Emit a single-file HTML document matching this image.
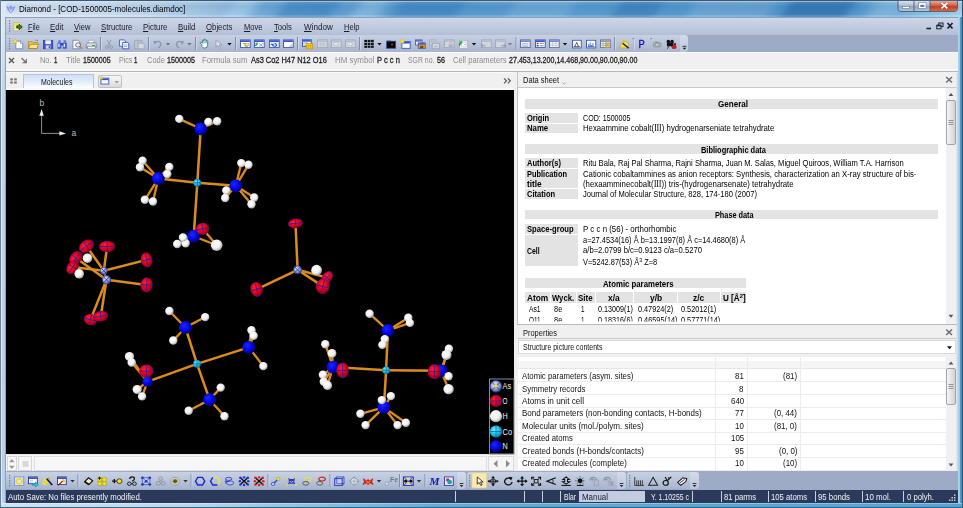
<!DOCTYPE html>
<html><head><meta charset="utf-8"><title>Diamond - [COD-1500005-molecules.diamdoc]</title>
<style>
html,body{margin:0;padding:0}
body{width:963px;height:508px;position:relative;overflow:hidden;font-family:"Liberation Sans", sans-serif;background:#7fb0d8}
.t{position:absolute;white-space:nowrap;line-height:12px;transform-origin:0 50%;display:inline-block}
.t u{text-decoration:underline;text-underline-offset:1px;text-decoration-thickness:1px}
svg{position:absolute;overflow:visible}
</style></head><body>
<div style="position:absolute;left:0;top:0;width:963px;height:508px;
background:
linear-gradient(90deg,#dde8f5 0px,#d6e4f3 70px,#c3d9ee 150px,#9cc4e4 215px,#6fa9d8 270px,#5a9bd0 420px,#5b9dd1 600px,#5596cc 760px,#5a9bd0 860px,#86bde2 915px,#a6d2ee 963px);"></div>
<svg style="left:0;top:0;overflow:hidden" width="963" height="18" viewBox="0 0 963 18">
<defs><linearGradient id="tbv" x1="0" y1="0" x2="0" y2="1"><stop offset="0" stop-color="#fff" stop-opacity="0.12"/><stop offset="0.35" stop-color="#003a70" stop-opacity="0.10"/><stop offset="0.8" stop-color="#003a70" stop-opacity="0.02"/><stop offset="0.86" stop-color="#fff" stop-opacity="0.14"/><stop offset="1" stop-color="#fff" stop-opacity="0.22"/></linearGradient>
<filter id="bl" x="-10%" y="-50%" width="120%" height="200%"><feGaussianBlur stdDeviation="5 1.5"/></filter></defs>
<g filter="url(#bl)">
<polygon points="238,-4 262,-4 244,22 220,22" fill="#b4d8f2" opacity="0.55"/>
<polygon points="290,-4 345,-4 327,22 272,22" fill="#2f78b6" opacity="0.45"/>
<polygon points="365,-4 392,-4 374,22 347,22" fill="#a8d3f0" opacity="0.45"/>
<polygon points="405,-4 470,-4 452,22 387,22" fill="#2f78b6" opacity="0.40"/>
<polygon points="520,-4 580,-4 562,22 502,22" fill="#9ccaec" opacity="0.30"/>
<polygon points="625,-4 668,-4 650,22 607,22" fill="#2a70ae" opacity="0.45"/>
<polygon points="700,-4 780,-4 762,22 682,22" fill="#9ccaec" opacity="0.30"/>
<polygon points="795,-4 860,-4 842,22 777,22" fill="#1f65a3" opacity="0.55"/>
<polygon points="880,-4 905,-4 887,22 862,22" fill="#a8d3f0" opacity="0.30"/>
</g>
<rect x="0" y="0" width="963" height="18" fill="url(#tbv)"/>
<rect x="0" y="0" width="963" height="1" fill="#415669"/>
<rect x="0" y="1" width="963" height="1" fill="#cfe6f7" opacity="0.55"/>
</svg>
<div style="position:absolute;left:0px;top:0px;width:1px;height:508px;background:#6f8194;"></div>
<div style="position:absolute;left:962px;top:0px;width:1px;height:508px;background:#2e4a63;"></div>
<div style="position:absolute;left:1px;top:2px;width:5px;height:505px;background:linear-gradient(180deg,#dde8f5 0,#dbe7f4 28px,#c0d6ed 80px,#b6cfea 100%);"></div>
<div style="position:absolute;left:1px;top:2px;width:1px;height:505px;background:#eef4fb;opacity:0.7"></div>
<div style="position:absolute;left:5px;top:17px;width:1px;height:487px;background:#8da2bb;"></div>
<div style="position:absolute;left:957px;top:17px;width:6px;height:491px;background:linear-gradient(90deg,#dfe7f0 0,#b4d4ea 1px,#a2cbe6 2.5px,#5a9fcb 3px,#3f86b4 5px,#2a5a78 5.2px,#2a5a78 6px);"></div>
<div style="position:absolute;left:1px;top:503px;width:961px;height:4px;background:linear-gradient(90deg,#cfe2f2 0,#bcd8ed 180px,#8ec2e4 300px,#62a9d8 440px,#55a2d3 100%);"></div>
<div style="position:absolute;left:1px;top:503px;width:961px;height:1px;background:rgba(255,255,255,0.35);"></div>
<div style="position:absolute;left:0px;top:506.5px;width:963px;height:1.5px;background:#2a6a80;"></div>
<div style="position:absolute;left:6px;top:17px;width:952px;height:1px;background:#8ea1ba;"></div>
<div style="position:absolute;left:6px;top:18px;width:952px;height:17px;background:linear-gradient(180deg,#cdd6e7,#c2cce0 50%,#b3bfd6);"></div>
<div style="position:absolute;left:6px;top:35px;width:952px;height:17.4px;background:#9dabc7;"></div>
<div style="position:absolute;left:6px;top:35.4px;width:682px;height:17px;background:linear-gradient(180deg,#c8d1e3,#b9c4da 50%,#a7b4ce);border-radius:0 3px 3px 0"></div>
<div style="position:absolute;left:6px;top:52.4px;width:952px;height:18px;background:#f0f0f0;"></div>
<div style="position:absolute;left:6px;top:52.4px;width:952px;height:1px;background:#fafafa;"></div>
<div style="position:absolute;left:6px;top:70px;width:951px;height:401px;background:#f0f0f0;"></div>
<div style="position:absolute;left:6px;top:69px;width:952px;height:2px;background:#f8f8f8;"></div>
<div style="position:absolute;left:6px;top:71px;width:952px;height:1px;background:#b6b6b6;"></div>
<div style="position:absolute;left:6px;top:72px;width:952px;height:1px;background:#fafafa;"></div>
<div style="position:absolute;left:22.5px;top:73.5px;width:71px;height:14.5px;background:linear-gradient(180deg,#cfe0f7,#e3eefb 55%,#ffffff);border:1px solid #b4c6df;border-bottom:none;box-sizing:border-box"></div>
<div style="position:absolute;left:6px;top:88px;width:508px;height:2px;background:#f8f8f8;"></div>
<div style="position:absolute;left:97.5px;top:74.5px;width:24px;height:13px;background:linear-gradient(180deg,#f6f6f6,#ececec 50%,#d9d9d9);border:1px solid #c2c2c2;box-sizing:border-box;border-radius:2px"></div>
<div style="position:absolute;left:6px;top:90px;width:508px;height:364px;background:#000;"></div>
<div style="position:absolute;left:6px;top:454px;width:508px;height:1px;background:#e8e8e8;"></div>
<div style="position:absolute;left:6px;top:455px;width:508px;height:16px;background:#f4f4f4;"></div>
<div style="position:absolute;left:6.5px;top:456px;width:10.5px;height:15px;background:#f7f7f7;border:1px solid #d6d6d6;box-sizing:border-box"></div>
<div style="position:absolute;left:18px;top:456px;width:14px;height:15px;background:#f7f7f7;border:1px solid #d6d6d6;box-sizing:border-box"></div>
<div style="position:absolute;left:33.5px;top:456px;width:453.5px;height:15px;background:#f6f6f6;border:1px solid #dedede;box-sizing:border-box"></div>
<div style="position:absolute;left:488px;top:456px;width:26px;height:15px;background:#f6f6f6;border:1px solid #dadada;box-sizing:border-box"></div>
<svg style="left:0;top:454px" width="520" height="18" viewBox="0 454 520 18">
<polygon points="9,462.2 14.600,462.2 11.800,459" fill="#9a9a9a"/><polygon points="9,465.800 14.600,465.800 11.800,469" fill="#9a9a9a"/>
<g stroke="#b4b4b4" stroke-width="0.9"><path d="M22.500 462h6M22.500 464h6M22.500 466h6"/></g>
<polygon points="497.5,460 497.5,467.5 493.5,463.7" fill="#8c8c8c"/><polygon points="506,460 506,467.5 510,463.7" fill="#8c8c8c"/>
</svg>
<div style="position:absolute;left:514px;top:72px;width:4px;height:399px;background:#f0f0f0;"></div>
<div style="position:absolute;left:518px;top:72px;width:439px;height:16px;background:#f0f0f0;"></div>
<div style="position:absolute;left:517px;top:72px;width:1px;height:252px;background:#c4c4c4;"></div>
<div style="position:absolute;left:518px;top:87px;width:439px;height:1px;background:#c8c8c8;"></div>
<div style="position:absolute;left:518px;top:88px;width:428px;height:236px;background:#fff;"></div>
<div style="position:absolute;left:946px;top:88px;width:10px;height:236px;background:#f0f0f0;"></div>
<div style="position:absolute;left:946.2px;top:100px;width:9.6px;height:44.6px;background:linear-gradient(90deg,#f5f5f5,#e6e6e6 45%,#d2d2d2);border:1px solid #a3a3a3;box-sizing:border-box;border-radius:2px"></div>
<svg style="left:940px;top:88px" width="20" height="240" viewBox="940 88 20 240">
<polygon points="948.6,96 953.4,96 951,93" fill="#555"/><polygon points="948.6,314.8 953.4,314.8 951,317.8" fill="#555"/>
<path d="M948.5 120.5h5M948.5 122.5h5M948.5 124.5h5" stroke="#8a8a8a" stroke-width="0.9"/></svg>
<div style="position:absolute;left:956px;top:72px;width:1px;height:399px;background:#e4e4e4;"></div>
<div style="position:absolute;left:525px;top:99px;width:413px;height:9.5px;background:#e3e3e3;"></div>
<div style="position:absolute;left:525px;top:113px;width:53px;height:20px;background:#e3e3e3;"></div>
<div style="position:absolute;left:525px;top:144.2px;width:413px;height:9.5px;background:#e3e3e3;"></div>
<div style="position:absolute;left:525px;top:158.4px;width:53px;height:40.2px;background:#e3e3e3;"></div>
<div style="position:absolute;left:525px;top:210.3px;width:413px;height:9.2px;background:#e3e3e3;"></div>
<div style="position:absolute;left:525px;top:224.2px;width:53px;height:41.7px;background:#e3e3e3;"></div>
<div style="position:absolute;left:525px;top:122.7px;width:53px;height:0.8px;background:#fff;"></div>
<div style="position:absolute;left:525px;top:168.1px;width:53px;height:0.8px;background:#fff;"></div>
<div style="position:absolute;left:525px;top:188.2px;width:53px;height:0.8px;background:#fff;"></div>
<div style="position:absolute;left:525px;top:234px;width:53px;height:0.8px;background:#fff;"></div>
<div style="position:absolute;left:525px;top:278px;width:221px;height:9.8px;background:#e3e3e3;"></div>
<div style="position:absolute;left:525px;top:292px;width:25px;height:11.4px;background:#e3e3e3;"></div>
<div style="position:absolute;left:551px;top:292px;width:25px;height:11.4px;background:#e3e3e3;"></div>
<div style="position:absolute;left:577px;top:292px;width:17.5px;height:11.4px;background:#e3e3e3;"></div>
<div style="position:absolute;left:595.5px;top:292px;width:37.5px;height:11.4px;background:#e3e3e3;"></div>
<div style="position:absolute;left:634px;top:292px;width:43px;height:11.4px;background:#e3e3e3;"></div>
<div style="position:absolute;left:678px;top:292px;width:41.5px;height:11.4px;background:#e3e3e3;"></div>
<div style="position:absolute;left:720.5px;top:292px;width:25.5px;height:11.4px;background:#e3e3e3;"></div>
<div style="position:absolute;left:517px;top:324.3px;width:440px;height:1px;background:#b9b9b9;"></div>
<div style="position:absolute;left:518px;top:325px;width:438px;height:14px;background:#f0f0f0;border-bottom:1px solid #c9c9c9;box-sizing:border-box"></div>
<div style="position:absolute;left:518px;top:339.7px;width:438px;height:14.5px;background:#fff;border:1px solid #dadada;box-sizing:border-box"></div>
<div style="position:absolute;left:518px;top:356.5px;width:428px;height:114.5px;background:#fff;"></div>
<div style="position:absolute;left:518px;top:361px;width:428px;height:7px;background:#f5f5f5;"></div>
<div style="position:absolute;left:518px;top:368px;width:428px;height:1px;background:#e6e6e6;"></div>
<div style="position:absolute;left:715px;top:357px;width:1px;height:114px;background:#ececec;"></div>
<div style="position:absolute;left:746.5px;top:357px;width:1px;height:114px;background:#ececec;"></div>
<div style="position:absolute;left:800px;top:357px;width:1px;height:114px;background:#ececec;"></div>
<div style="position:absolute;left:518px;top:381px;width:428px;height:1px;background:#ededed;"></div>
<div style="position:absolute;left:518px;top:394px;width:428px;height:1px;background:#ededed;"></div>
<div style="position:absolute;left:518px;top:407px;width:428px;height:1px;background:#ededed;"></div>
<div style="position:absolute;left:518px;top:419px;width:428px;height:1px;background:#ededed;"></div>
<div style="position:absolute;left:518px;top:432px;width:428px;height:1px;background:#ededed;"></div>
<div style="position:absolute;left:518px;top:444px;width:428px;height:1px;background:#ededed;"></div>
<div style="position:absolute;left:518px;top:457px;width:428px;height:1px;background:#ededed;"></div>
<div style="position:absolute;left:518px;top:470px;width:428px;height:1px;background:#ededed;"></div>
<div style="position:absolute;left:946px;top:357px;width:10px;height:114px;background:#f0f0f0;"></div>
<div style="position:absolute;left:946.2px;top:368px;width:9.6px;height:36.8px;background:linear-gradient(90deg,#f5f5f5,#e6e6e6 45%,#d2d2d2);border:1px solid #a3a3a3;box-sizing:border-box;border-radius:2px"></div>
<svg style="left:940px;top:340px" width="20" height="135" viewBox="940 340 20 135">
<polygon points="948.6,364.5 953.4,364.5 951,361.5" fill="#555"/><polygon points="948.6,463.5 953.4,463.5 951,466.5" fill="#555"/>
<polygon points="947,346.3 952,346.3 949.5,349.2" fill="#111"/>
<path d="M948.5 384.5h5M948.5 386.5h5M948.5 388.5h5" stroke="#8a8a8a" stroke-width="0.9"/></svg>
<svg style="left:940px;top:72px" width="20" height="270" viewBox="940 72 20 270">
<path d="M946.2 77l5.800 5.500M952 77l-5.800 5.500" stroke="#6b6b6b" stroke-width="1.5"/>
<path d="M946.2 329.5l5.800 5.500M952 329.5l-5.800 5.500" stroke="#6b6b6b" stroke-width="1.5"/></svg>
<div style="position:absolute;left:6px;top:471px;width:952px;height:19px;background:#9dabc7;"></div>
<div style="position:absolute;left:6px;top:472px;width:460px;height:17px;background:linear-gradient(180deg,#c8d1e3,#b9c4da 50%,#a7b4ce);border-radius:0 3px 3px 0"></div>
<div style="position:absolute;left:467px;top:472px;width:159px;height:17px;background:linear-gradient(180deg,#c8d1e3,#b9c4da 50%,#a7b4ce);border-radius:3px"></div>
<div style="position:absolute;left:627px;top:472px;width:72px;height:17px;background:linear-gradient(180deg,#c8d1e3,#b9c4da 50%,#a7b4ce);border-radius:3px"></div>
<div style="position:absolute;left:457px;top:472px;width:9px;height:17px;background:rgba(255,255,255,0.22);border-radius:0 3px 3px 0"></div>
<div style="position:absolute;left:617px;top:472px;width:9px;height:17px;background:rgba(255,255,255,0.22);border-radius:0 3px 3px 0"></div>
<div style="position:absolute;left:690px;top:472px;width:9px;height:17px;background:rgba(255,255,255,0.22);border-radius:0 3px 3px 0"></div>
<div style="position:absolute;left:680px;top:35px;width:8px;height:17px;background:rgba(255,255,255,0.22);border-radius:0 3px 3px 0"></div>
<div style="position:absolute;left:6px;top:489.5px;width:952px;height:13.5px;background:#2b3a5a;"></div>
<div style="position:absolute;left:455px;top:491px;width:1px;height:11px;background:#c9d0de;"></div>
<div style="position:absolute;left:524px;top:491px;width:1px;height:11px;background:#c9d0de;"></div>
<div style="position:absolute;left:542px;top:491px;width:1px;height:11px;background:#c9d0de;"></div>
<div style="position:absolute;left:560px;top:491px;width:1px;height:11px;background:#c9d0de;"></div>
<div style="position:absolute;left:578.5px;top:491px;width:1px;height:11px;background:#c9d0de;"></div>
<div style="position:absolute;left:691.5px;top:491px;width:1px;height:11px;background:#c9d0de;"></div>
<div style="position:absolute;left:720.5px;top:491px;width:1px;height:11px;background:#c9d0de;"></div>
<div style="position:absolute;left:767.5px;top:491px;width:1px;height:11px;background:#c9d0de;"></div>
<div style="position:absolute;left:814.5px;top:491px;width:1px;height:11px;background:#c9d0de;"></div>
<div style="position:absolute;left:861.5px;top:491px;width:1px;height:11px;background:#c9d0de;"></div>
<div style="position:absolute;left:903px;top:491px;width:1px;height:11px;background:#c9d0de;"></div>
<div style="position:absolute;left:580px;top:491px;width:65px;height:11px;background:#c3cbdf;"></div>
<svg style="left:6px;top:90px" width="508" height="364" viewBox="6 90 508 364">
<defs>
<radialGradient id="gN" cx="0.38" cy="0.35" r="0.7"><stop offset="0" stop-color="#1c28ff"/><stop offset="0.5" stop-color="#0408ea"/><stop offset="1" stop-color="#000070"/></radialGradient>
<radialGradient id="gH" cx="0.4" cy="0.38" r="0.7"><stop offset="0" stop-color="#ffffff"/><stop offset="0.55" stop-color="#f0f0f0"/><stop offset="1" stop-color="#8a8a8a"/></radialGradient>
<radialGradient id="gO" cx="0.4" cy="0.38" r="0.7"><stop offset="0" stop-color="#ff2434"/><stop offset="0.5" stop-color="#e60018"/><stop offset="1" stop-color="#80000c"/></radialGradient>
<radialGradient id="gC" cx="0.4" cy="0.38" r="0.7"><stop offset="0" stop-color="#7af0ff"/><stop offset="0.5" stop-color="#18c4ee"/><stop offset="1" stop-color="#0a6a98"/></radialGradient>
<radialGradient id="gA" cx="0.4" cy="0.38" r="0.7"><stop offset="0" stop-color="#e8ecff"/><stop offset="0.5" stop-color="#9aa4d8"/><stop offset="1" stop-color="#3a4690"/></radialGradient>
</defs>
<line x1="202.6" y1="228.8" x2="216.7" y2="245.2" stroke="#dc8c1c" stroke-width="2.3" stroke-linecap="round"/>
<line x1="197.3" y1="182.8" x2="200.7" y2="128.8" stroke="#dc8c1c" stroke-width="2.5" stroke-linecap="round"/>
<line x1="197.3" y1="182.8" x2="158.3" y2="178.5" stroke="#dc8c1c" stroke-width="2.5" stroke-linecap="round"/>
<line x1="197.3" y1="182.8" x2="235.8" y2="185.8" stroke="#dc8c1c" stroke-width="2.5" stroke-linecap="round"/>
<line x1="197.3" y1="182.8" x2="193.7" y2="236.2" stroke="#dc8c1c" stroke-width="2.5" stroke-linecap="round"/>
<line x1="200.7" y1="128.8" x2="179.3" y2="118.9" stroke="#dc8c1c" stroke-width="2.3" stroke-linecap="round"/>
<line x1="200.7" y1="128.8" x2="217.2" y2="121.3" stroke="#dc8c1c" stroke-width="2.3" stroke-linecap="round"/>
<line x1="200.7" y1="128.8" x2="208.4" y2="121.9" stroke="#dc8c1c" stroke-width="2.3" stroke-linecap="round"/>
<line x1="158.3" y1="178.5" x2="142.6" y2="160.7" stroke="#dc8c1c" stroke-width="2.3" stroke-linecap="round"/>
<line x1="158.3" y1="178.5" x2="140.0" y2="167.2" stroke="#dc8c1c" stroke-width="2.3" stroke-linecap="round"/>
<line x1="158.3" y1="178.5" x2="169.3" y2="166.9" stroke="#dc8c1c" stroke-width="2.3" stroke-linecap="round"/>
<line x1="158.3" y1="178.5" x2="167.3" y2="174.1" stroke="#dc8c1c" stroke-width="2.3" stroke-linecap="round"/>
<line x1="158.3" y1="178.5" x2="144.9" y2="199.8" stroke="#dc8c1c" stroke-width="2.3" stroke-linecap="round"/>
<line x1="158.3" y1="178.5" x2="153.0" y2="201.5" stroke="#dc8c1c" stroke-width="2.3" stroke-linecap="round"/>
<line x1="235.8" y1="185.8" x2="241.3" y2="163.1" stroke="#dc8c1c" stroke-width="2.3" stroke-linecap="round"/>
<line x1="235.8" y1="185.8" x2="248.5" y2="164.8" stroke="#dc8c1c" stroke-width="2.3" stroke-linecap="round"/>
<line x1="235.8" y1="185.8" x2="226.3" y2="190.4" stroke="#dc8c1c" stroke-width="2.3" stroke-linecap="round"/>
<line x1="235.8" y1="185.8" x2="225.2" y2="198.0" stroke="#dc8c1c" stroke-width="2.3" stroke-linecap="round"/>
<line x1="235.8" y1="185.8" x2="254.2" y2="197.5" stroke="#dc8c1c" stroke-width="2.3" stroke-linecap="round"/>
<line x1="235.8" y1="185.8" x2="251.5" y2="204.2" stroke="#dc8c1c" stroke-width="2.3" stroke-linecap="round"/>
<line x1="193.7" y1="236.2" x2="177.2" y2="244.0" stroke="#dc8c1c" stroke-width="2.3" stroke-linecap="round"/>
<line x1="193.7" y1="236.2" x2="185.6" y2="243.4" stroke="#dc8c1c" stroke-width="2.3" stroke-linecap="round"/>
<line x1="193.7" y1="236.2" x2="183.0" y2="237.4" stroke="#dc8c1c" stroke-width="2.3" stroke-linecap="round"/>
<line x1="193.7" y1="236.2" x2="216.7" y2="245.2" stroke="#dc8c1c" stroke-width="2.3" stroke-linecap="round"/>
<g transform="translate(197.3 182.8)"><circle r="3.8" fill="url(#gC)"/><path d="M-3.8 0H3.8M0 -3.8V3.8" stroke="#0a5a9a" stroke-width="0.7"/></g>
<circle cx="200.7" cy="128.8" r="6.4" fill="url(#gN)"/>
<circle cx="179.3" cy="118.9" r="4.2" fill="url(#gH)"/>
<circle cx="217.2" cy="121.3" r="4.2" fill="url(#gH)"/>
<circle cx="208.4" cy="121.9" r="4.2" fill="url(#gH)"/>
<circle cx="158.3" cy="178.5" r="6.4" fill="url(#gN)"/>
<circle cx="142.6" cy="160.7" r="4.2" fill="url(#gH)"/>
<circle cx="140.0" cy="167.2" r="4.2" fill="url(#gH)"/>
<circle cx="169.3" cy="166.9" r="4.2" fill="url(#gH)"/>
<circle cx="167.3" cy="174.1" r="4.2" fill="url(#gH)"/>
<circle cx="144.9" cy="199.8" r="4.2" fill="url(#gH)"/>
<circle cx="153.0" cy="201.5" r="4.2" fill="url(#gH)"/>
<circle cx="235.8" cy="185.8" r="6.4" fill="url(#gN)"/>
<circle cx="241.3" cy="163.1" r="4.2" fill="url(#gH)"/>
<circle cx="248.5" cy="164.8" r="4.2" fill="url(#gH)"/>
<circle cx="226.3" cy="190.4" r="4.2" fill="url(#gH)"/>
<circle cx="225.2" cy="198.0" r="4.2" fill="url(#gH)"/>
<circle cx="254.2" cy="197.5" r="4.2" fill="url(#gH)"/>
<circle cx="251.5" cy="204.2" r="4.2" fill="url(#gH)"/>
<circle cx="193.7" cy="236.2" r="6.4" fill="url(#gN)"/>
<g transform="translate(202.6 228.8) rotate(-10)"><ellipse rx="6.6" ry="6" fill="url(#gO)"/><path d="M-6.6 0H6.6M0 -6V6" stroke="#2a1aa0" stroke-width="0.8" fill="none"/><ellipse rx="6.3" ry="5.7" fill="none" stroke="#3a1aa0" stroke-width="0.5" opacity="0.7"/></g>
<circle cx="177.2" cy="244.0" r="4.2" fill="url(#gH)"/>
<circle cx="185.6" cy="243.4" r="4.2" fill="url(#gH)"/>
<circle cx="183.0" cy="237.4" r="4.2" fill="url(#gH)"/>
<circle cx="216.7" cy="245.2" r="5.8" fill="url(#gH)"/>
<line x1="197.0" y1="363.9" x2="185.4" y2="327.5" stroke="#dc8c1c" stroke-width="2.5" stroke-linecap="round"/>
<line x1="197.0" y1="363.9" x2="248.8" y2="347.4" stroke="#dc8c1c" stroke-width="2.5" stroke-linecap="round"/>
<line x1="197.0" y1="363.9" x2="209.6" y2="399.7" stroke="#dc8c1c" stroke-width="2.5" stroke-linecap="round"/>
<line x1="197.0" y1="363.9" x2="147.6" y2="381.6" stroke="#dc8c1c" stroke-width="2.5" stroke-linecap="round"/>
<line x1="185.4" y1="327.5" x2="169.4" y2="311.0" stroke="#dc8c1c" stroke-width="2.3" stroke-linecap="round"/>
<line x1="185.4" y1="327.5" x2="205.2" y2="317.1" stroke="#dc8c1c" stroke-width="2.3" stroke-linecap="round"/>
<line x1="185.4" y1="327.5" x2="173.3" y2="340.5" stroke="#dc8c1c" stroke-width="2.3" stroke-linecap="round"/>
<line x1="248.8" y1="347.4" x2="251.5" y2="330.3" stroke="#dc8c1c" stroke-width="2.3" stroke-linecap="round"/>
<line x1="248.8" y1="347.4" x2="253.7" y2="335.8" stroke="#dc8c1c" stroke-width="2.3" stroke-linecap="round"/>
<line x1="248.8" y1="347.4" x2="263.4" y2="366.1" stroke="#dc8c1c" stroke-width="2.3" stroke-linecap="round"/>
<line x1="209.6" y1="399.7" x2="220.7" y2="387.6" stroke="#dc8c1c" stroke-width="2.3" stroke-linecap="round"/>
<line x1="209.6" y1="399.7" x2="188.7" y2="410.7" stroke="#dc8c1c" stroke-width="2.3" stroke-linecap="round"/>
<line x1="209.6" y1="399.7" x2="224.5" y2="416.3" stroke="#dc8c1c" stroke-width="2.3" stroke-linecap="round"/>
<line x1="147.6" y1="381.6" x2="129.5" y2="356.5" stroke="#dc8c1c" stroke-width="2.3" stroke-linecap="round"/>
<line x1="147.6" y1="381.6" x2="131.7" y2="362.5" stroke="#dc8c1c" stroke-width="2.3" stroke-linecap="round"/>
<line x1="147.6" y1="381.6" x2="137.2" y2="389.5" stroke="#dc8c1c" stroke-width="2.3" stroke-linecap="round"/>
<line x1="147.6" y1="381.6" x2="142.1" y2="396.4" stroke="#dc8c1c" stroke-width="2.3" stroke-linecap="round"/>
<g transform="translate(197.0 363.9)"><circle r="3.8" fill="url(#gC)"/><path d="M-3.8 0H3.8M0 -3.8V3.8" stroke="#0a5a9a" stroke-width="0.7"/></g>
<circle cx="185.4" cy="327.5" r="6.4" fill="url(#gN)"/>
<circle cx="169.4" cy="311.0" r="4.2" fill="url(#gH)"/>
<circle cx="205.2" cy="317.1" r="4.2" fill="url(#gH)"/>
<circle cx="173.3" cy="340.5" r="4.2" fill="url(#gH)"/>
<circle cx="248.8" cy="347.4" r="6.4" fill="url(#gN)"/>
<circle cx="251.5" cy="330.3" r="4.2" fill="url(#gH)"/>
<circle cx="253.7" cy="335.8" r="4.2" fill="url(#gH)"/>
<circle cx="263.4" cy="366.1" r="4.2" fill="url(#gH)"/>
<circle cx="209.6" cy="399.7" r="6.4" fill="url(#gN)"/>
<circle cx="220.7" cy="387.6" r="4.2" fill="url(#gH)"/>
<circle cx="188.7" cy="410.7" r="4.2" fill="url(#gH)"/>
<circle cx="224.5" cy="416.3" r="4.2" fill="url(#gH)"/>
<circle cx="147.6" cy="381.6" r="5.2" fill="url(#gN)"/>
<g transform="translate(146.3 371.1) rotate(0)"><ellipse rx="7" ry="6.6" fill="url(#gO)"/><path d="M-7 0H7M0 -6.6V6.6" stroke="#2a1aa0" stroke-width="0.8" fill="none"/><ellipse rx="6.7" ry="6.3" fill="none" stroke="#3a1aa0" stroke-width="0.5" opacity="0.7"/></g>
<circle cx="129.5" cy="356.5" r="4.6" fill="url(#gH)"/>
<circle cx="131.7" cy="362.5" r="4.2" fill="url(#gH)"/>
<circle cx="137.2" cy="389.5" r="4.6" fill="url(#gH)"/>
<circle cx="142.1" cy="396.4" r="4.2" fill="url(#gH)"/>
<line x1="386.1" y1="370.2" x2="387.9" y2="330.5" stroke="#dc8c1c" stroke-width="2.5" stroke-linecap="round"/>
<line x1="386.1" y1="370.2" x2="333.0" y2="367.1" stroke="#dc8c1c" stroke-width="2.5" stroke-linecap="round"/>
<line x1="386.1" y1="370.2" x2="441.0" y2="370.8" stroke="#dc8c1c" stroke-width="2.5" stroke-linecap="round"/>
<line x1="386.1" y1="370.2" x2="383.9" y2="407.4" stroke="#dc8c1c" stroke-width="2.5" stroke-linecap="round"/>
<line x1="387.9" y1="330.5" x2="369.6" y2="313.7" stroke="#dc8c1c" stroke-width="2.3" stroke-linecap="round"/>
<line x1="387.9" y1="330.5" x2="408.3" y2="317.7" stroke="#dc8c1c" stroke-width="2.3" stroke-linecap="round"/>
<line x1="387.9" y1="330.5" x2="409.9" y2="322.9" stroke="#dc8c1c" stroke-width="2.3" stroke-linecap="round"/>
<line x1="387.9" y1="330.5" x2="384.8" y2="339.1" stroke="#dc8c1c" stroke-width="2.3" stroke-linecap="round"/>
<line x1="387.9" y1="330.5" x2="382.4" y2="344.9" stroke="#dc8c1c" stroke-width="2.3" stroke-linecap="round"/>
<line x1="333.0" y1="367.1" x2="325.3" y2="344.2" stroke="#dc8c1c" stroke-width="2.3" stroke-linecap="round"/>
<line x1="333.0" y1="367.1" x2="332.0" y2="353.4" stroke="#dc8c1c" stroke-width="2.3" stroke-linecap="round"/>
<line x1="333.0" y1="367.1" x2="322.9" y2="374.8" stroke="#dc8c1c" stroke-width="2.3" stroke-linecap="round"/>
<line x1="333.0" y1="367.1" x2="323.8" y2="381.8" stroke="#dc8c1c" stroke-width="2.3" stroke-linecap="round"/>
<line x1="333.0" y1="367.1" x2="327.5" y2="385.4" stroke="#dc8c1c" stroke-width="2.3" stroke-linecap="round"/>
<line x1="441.0" y1="370.8" x2="448.9" y2="348.8" stroke="#dc8c1c" stroke-width="2.3" stroke-linecap="round"/>
<line x1="441.0" y1="370.8" x2="446.5" y2="354.9" stroke="#dc8c1c" stroke-width="2.3" stroke-linecap="round"/>
<line x1="441.0" y1="370.8" x2="448.6" y2="376.3" stroke="#dc8c1c" stroke-width="2.3" stroke-linecap="round"/>
<line x1="441.0" y1="370.8" x2="448.6" y2="389.1" stroke="#dc8c1c" stroke-width="2.3" stroke-linecap="round"/>
<line x1="383.9" y1="407.4" x2="390.9" y2="396.1" stroke="#dc8c1c" stroke-width="2.3" stroke-linecap="round"/>
<line x1="383.9" y1="407.4" x2="381.8" y2="400.1" stroke="#dc8c1c" stroke-width="2.3" stroke-linecap="round"/>
<line x1="383.9" y1="407.4" x2="360.4" y2="413.8" stroke="#dc8c1c" stroke-width="2.3" stroke-linecap="round"/>
<line x1="383.9" y1="407.4" x2="365.6" y2="425.1" stroke="#dc8c1c" stroke-width="2.3" stroke-linecap="round"/>
<line x1="383.9" y1="407.4" x2="397.6" y2="425.1" stroke="#dc8c1c" stroke-width="2.3" stroke-linecap="round"/>
<line x1="383.9" y1="407.4" x2="405.9" y2="422.7" stroke="#dc8c1c" stroke-width="2.3" stroke-linecap="round"/>
<g transform="translate(386.1 370.2)"><circle r="3.8" fill="url(#gC)"/><path d="M-3.8 0H3.8M0 -3.8V3.8" stroke="#0a5a9a" stroke-width="0.7"/></g>
<circle cx="387.9" cy="330.5" r="6.4" fill="url(#gN)"/>
<circle cx="369.6" cy="313.7" r="4.2" fill="url(#gH)"/>
<circle cx="408.3" cy="317.7" r="4.2" fill="url(#gH)"/>
<circle cx="409.9" cy="322.9" r="4.2" fill="url(#gH)"/>
<circle cx="384.8" cy="339.1" r="4.2" fill="url(#gH)"/>
<circle cx="382.4" cy="344.9" r="4.2" fill="url(#gH)"/>
<circle cx="333.0" cy="367.1" r="6.4" fill="url(#gN)"/>
<g transform="translate(342.6 370.4) rotate(0)"><ellipse rx="6.2" ry="7.6" fill="url(#gO)"/><path d="M-6.2 0H6.2M0 -7.6V7.6" stroke="#2a1aa0" stroke-width="0.8" fill="none"/><ellipse rx="5.9" ry="7.3" fill="none" stroke="#3a1aa0" stroke-width="0.5" opacity="0.7"/></g>
<circle cx="325.3" cy="344.2" r="4.2" fill="url(#gH)"/>
<circle cx="332.0" cy="353.4" r="4.4" fill="url(#gH)"/>
<circle cx="322.9" cy="374.8" r="4.2" fill="url(#gH)"/>
<circle cx="323.8" cy="381.8" r="4.2" fill="url(#gH)"/>
<circle cx="327.5" cy="385.4" r="4.6" fill="url(#gH)"/>
<circle cx="441.0" cy="370.8" r="6.4" fill="url(#gN)"/>
<g transform="translate(434.3 371.7) rotate(0)"><ellipse rx="6.4" ry="7.4" fill="url(#gO)"/><path d="M-6.4 0H6.4M0 -7.4V7.4" stroke="#2a1aa0" stroke-width="0.8" fill="none"/><ellipse rx="6.1000000000000005" ry="7.1000000000000005" fill="none" stroke="#3a1aa0" stroke-width="0.5" opacity="0.7"/></g>
<circle cx="448.9" cy="348.8" r="4.2" fill="url(#gH)"/>
<circle cx="446.5" cy="354.9" r="5" fill="url(#gH)"/>
<circle cx="448.6" cy="376.3" r="4.2" fill="url(#gH)"/>
<circle cx="448.6" cy="389.1" r="5.2" fill="url(#gH)"/>
<circle cx="383.9" cy="407.4" r="6.4" fill="url(#gN)"/>
<circle cx="390.9" cy="396.1" r="4.2" fill="url(#gH)"/>
<circle cx="381.8" cy="400.1" r="4.2" fill="url(#gH)"/>
<circle cx="360.4" cy="413.8" r="4.2" fill="url(#gH)"/>
<circle cx="365.6" cy="425.1" r="4.2" fill="url(#gH)"/>
<circle cx="397.6" cy="425.1" r="4.2" fill="url(#gH)"/>
<circle cx="405.9" cy="422.7" r="4.2" fill="url(#gH)"/>
<line x1="103.8" y1="270.8" x2="86.5" y2="246.2" stroke="#dc8c1c" stroke-width="2.5" stroke-linecap="round"/>
<line x1="103.8" y1="270.8" x2="107.1" y2="246.5" stroke="#dc8c1c" stroke-width="2.5" stroke-linecap="round"/>
<line x1="103.8" y1="270.8" x2="146.6" y2="259.9" stroke="#dc8c1c" stroke-width="2.5" stroke-linecap="round"/>
<line x1="106.5" y1="279.8" x2="146.6" y2="285.0" stroke="#dc8c1c" stroke-width="2.5" stroke-linecap="round"/>
<line x1="106.5" y1="279.8" x2="75.9" y2="258.0" stroke="#dc8c1c" stroke-width="2.5" stroke-linecap="round"/>
<line x1="103.8" y1="270.8" x2="72.6" y2="267.0" stroke="#dc8c1c" stroke-width="2.5" stroke-linecap="round"/>
<line x1="106.5" y1="279.8" x2="90.5" y2="319.6" stroke="#dc8c1c" stroke-width="2.5" stroke-linecap="round"/>
<line x1="106.5" y1="279.8" x2="100.8" y2="316.3" stroke="#dc8c1c" stroke-width="2.5" stroke-linecap="round"/>
<line x1="103.8" y1="270.8" x2="106.5" y2="279.8" stroke="#dc8c1c" stroke-width="2" stroke-linecap="round"/>
<g transform="translate(86.5 246.2) rotate(-35)"><ellipse rx="8" ry="5.8" fill="url(#gO)"/><path d="M-8 0H8M0 -5.8V5.8" stroke="#2a1aa0" stroke-width="0.8" fill="none"/><ellipse rx="7.7" ry="5.5" fill="none" stroke="#3a1aa0" stroke-width="0.5" opacity="0.7"/></g>
<g transform="translate(107.1 246.5) rotate(0)"><ellipse rx="8" ry="5.6" fill="url(#gO)"/><path d="M-8 0H8M0 -5.6V5.6" stroke="#2a1aa0" stroke-width="0.8" fill="none"/><ellipse rx="7.7" ry="5.3" fill="none" stroke="#3a1aa0" stroke-width="0.5" opacity="0.7"/></g>
<g transform="translate(146.6 259.9) rotate(-12)"><ellipse rx="5.6" ry="7.5" fill="url(#gO)"/><path d="M-5.6 0H5.6M0 -7.5V7.5" stroke="#2a1aa0" stroke-width="0.8" fill="none"/><ellipse rx="5.3" ry="7.2" fill="none" stroke="#3a1aa0" stroke-width="0.5" opacity="0.7"/></g>
<g transform="translate(146.6 285.0) rotate(5)"><ellipse rx="6" ry="7.4" fill="url(#gO)"/><path d="M-6 0H6M0 -7.4V7.4" stroke="#2a1aa0" stroke-width="0.8" fill="none"/><ellipse rx="5.7" ry="7.1000000000000005" fill="none" stroke="#3a1aa0" stroke-width="0.5" opacity="0.7"/></g>
<g transform="translate(75.9 258.0) rotate(-50)"><ellipse rx="7.6" ry="5.6" fill="url(#gO)"/><path d="M-7.6 0H7.6M0 -5.6V5.6" stroke="#2a1aa0" stroke-width="0.8" fill="none"/><ellipse rx="7.3" ry="5.3" fill="none" stroke="#3a1aa0" stroke-width="0.5" opacity="0.7"/></g>
<g transform="translate(72.6 267.0) rotate(-55)"><ellipse rx="7.6" ry="5.2" fill="url(#gO)"/><path d="M-7.6 0H7.6M0 -5.2V5.2" stroke="#2a1aa0" stroke-width="0.8" fill="none"/><ellipse rx="7.3" ry="4.9" fill="none" stroke="#3a1aa0" stroke-width="0.5" opacity="0.7"/></g>
<g transform="translate(90.5 319.6) rotate(15)"><ellipse rx="6.6" ry="5.6" fill="url(#gO)"/><path d="M-6.6 0H6.6M0 -5.6V5.6" stroke="#2a1aa0" stroke-width="0.8" fill="none"/><ellipse rx="6.3" ry="5.3" fill="none" stroke="#3a1aa0" stroke-width="0.5" opacity="0.7"/></g>
<g transform="translate(100.8 316.3) rotate(-10)"><ellipse rx="7.4" ry="5.2" fill="url(#gO)"/><path d="M-7.4 0H7.4M0 -5.2V5.2" stroke="#2a1aa0" stroke-width="0.8" fill="none"/><ellipse rx="7.1000000000000005" ry="4.9" fill="none" stroke="#3a1aa0" stroke-width="0.5" opacity="0.7"/></g>
<g transform="translate(103.8 270.8)"><circle r="3.6" fill="url(#gA)"/><path d="M-2.52 -2.52L2.52 2.52M-2.52 2.52L2.52 -2.52" stroke="#1a2a90" stroke-width="0.8"/><circle r="3.6" fill="none" stroke="#2838a0" stroke-width="0.7"/></g>
<g transform="translate(106.5 279.8)"><circle r="4.2" fill="url(#gA)"/><path d="M-2.94 -2.94L2.94 2.94M-2.94 2.94L2.94 -2.94" stroke="#1a2a90" stroke-width="0.8"/><circle r="4.2" fill="none" stroke="#2838a0" stroke-width="0.7"/></g>
<circle cx="87.5" cy="258.2" r="4.8" fill="url(#gH)"/>
<circle cx="79.2" cy="273.8" r="4.8" fill="url(#gH)"/>
<line x1="297.6" y1="269.8" x2="295.5" y2="223.4" stroke="#dc8c1c" stroke-width="2.5" stroke-linecap="round"/>
<line x1="297.6" y1="269.8" x2="256.6" y2="289.3" stroke="#dc8c1c" stroke-width="2.5" stroke-linecap="round"/>
<line x1="297.6" y1="269.8" x2="327.0" y2="277.6" stroke="#dc8c1c" stroke-width="2.5" stroke-linecap="round"/>
<line x1="297.6" y1="269.8" x2="322.8" y2="286.4" stroke="#dc8c1c" stroke-width="2.5" stroke-linecap="round"/>
<g transform="translate(295.5 223.4) rotate(-6)"><ellipse rx="7.4" ry="4.6" fill="url(#gO)"/><path d="M-7.4 0H7.4M0 -4.6V4.6" stroke="#2a1aa0" stroke-width="0.8" fill="none"/><ellipse rx="7.1000000000000005" ry="4.3" fill="none" stroke="#3a1aa0" stroke-width="0.5" opacity="0.7"/></g>
<g transform="translate(256.6 289.3) rotate(-15)"><ellipse rx="6" ry="7.4" fill="url(#gO)"/><path d="M-6 0H6M0 -7.4V7.4" stroke="#2a1aa0" stroke-width="0.8" fill="none"/><ellipse rx="5.7" ry="7.1000000000000005" fill="none" stroke="#3a1aa0" stroke-width="0.5" opacity="0.7"/></g>
<g transform="translate(327.0 277.6) rotate(38)"><ellipse rx="4.8" ry="7.2" fill="url(#gO)"/><path d="M-4.8 0H4.8M0 -7.2V7.2" stroke="#2a1aa0" stroke-width="0.8" fill="none"/><ellipse rx="4.5" ry="6.9" fill="none" stroke="#3a1aa0" stroke-width="0.5" opacity="0.7"/></g>
<g transform="translate(322.8 286.4) rotate(15)"><ellipse rx="6.8" ry="7.6" fill="url(#gO)"/><path d="M-6.8 0H6.8M0 -7.6V7.6" stroke="#2a1aa0" stroke-width="0.8" fill="none"/><ellipse rx="6.5" ry="7.3" fill="none" stroke="#3a1aa0" stroke-width="0.5" opacity="0.7"/></g>
<g transform="translate(297.6 269.8)"><circle r="4.0" fill="url(#gA)"/><path d="M-2.8 -2.8L2.8 2.8M-2.8 2.8L2.8 -2.8" stroke="#1a2a90" stroke-width="0.8"/><circle r="4.0" fill="none" stroke="#2838a0" stroke-width="0.7"/></g>
<circle cx="316.6" cy="270.2" r="5.4" fill="url(#gH)"/>
<g stroke="#a2a2a2" stroke-width="0.9" fill="#ececec"><path d="M41.6 112V133.4H62" fill="none"/><polygon points="41.6,109 39.4,115.8 43.8,115.8" stroke="none"/><polygon points="66,133.4 59.4,131.3 59.4,135.5" stroke="none"/></g>
<text x="39.6" y="105.5" font-size="8.5" fill="#bdbdbd" font-family="Liberation Sans, sans-serif">b</text>
<text x="71.6" y="135.6" font-size="8.5" fill="#bdbdbd" font-family="Liberation Sans, sans-serif">a</text>
<rect x="489.5" y="379" width="24.5" height="75" fill="#000" stroke="#8c8c8c" stroke-width="1"/>
<g transform="translate(496.0 386.3)"><circle r="5.8" fill="url(#gA)"/><path d="M-4.06 -4.06L4.06 4.06M-4.06 4.06L4.06 -4.06" stroke="#1a2a90" stroke-width="0.8"/><circle r="5.8" fill="none" stroke="#2838a0" stroke-width="0.7"/></g>
<polygon points="493.5,387.3 496,381.8 497.5,387.3" fill="#e8e040"/>
<g transform="translate(496.0 401.0) rotate(0)"><ellipse rx="6.1" ry="6.1" fill="url(#gO)"/><path d="M-6.1 0H6.1M0 -6.1V6.1" stroke="#2a1aa0" stroke-width="0.8" fill="none"/><ellipse rx="5.8" ry="5.8" fill="none" stroke="#3a1aa0" stroke-width="0.5" opacity="0.7"/></g>
<circle cx="496" cy="416.2" r="6.1" fill="url(#gH)"/>
<g transform="translate(496.0 431.5)"><circle r="6.1" fill="url(#gC)"/><path d="M-6.1 0H6.1M0 -6.1V6.1" stroke="#0a5a9a" stroke-width="0.7"/></g>
<circle cx="496.0" cy="446.3" r="6.1" fill="url(#gN)"/>
<text x="502.6" y="389.40000000000003" font-size="8.2" fill="#f4f4f4" font-family="Liberation Sans, sans-serif" textLength="8.5" lengthAdjust="spacingAndGlyphs">As</text>
<text x="502.6" y="404.1" font-size="8.2" fill="#f4f4f4" font-family="Liberation Sans, sans-serif" textLength="5" lengthAdjust="spacingAndGlyphs">O</text>
<text x="502.6" y="419.3" font-size="8.2" fill="#f4f4f4" font-family="Liberation Sans, sans-serif" textLength="5.2" lengthAdjust="spacingAndGlyphs">H</text>
<text x="502.6" y="434.6" font-size="8.2" fill="#f4f4f4" font-family="Liberation Sans, sans-serif" textLength="9.5" lengthAdjust="spacingAndGlyphs">Co</text>
<text x="502.6" y="449.40000000000003" font-size="8.2" fill="#f4f4f4" font-family="Liberation Sans, sans-serif" textLength="5.2" lengthAdjust="spacingAndGlyphs">N</text>
</svg>
<svg style="left:0;top:0;filter:blur(0.3px)" width="963" height="508" viewBox="0 0 963 508"><rect x="9" y="38" width="1.2" height="1.2" fill="#6d7b98"/><rect x="9" y="40.5" width="1.2" height="1.2" fill="#6d7b98"/><rect x="9" y="43.0" width="1.2" height="1.2" fill="#6d7b98"/><rect x="9" y="45.5" width="1.2" height="1.2" fill="#6d7b98"/><rect x="9" y="48.0" width="1.2" height="1.2" fill="#6d7b98"/>
<g transform="translate(13 39) scale(0.93 0.85)"><path d="M3 2.5h5l2.5 2.5v6.5h-7.5z" fill="#fff" stroke="#6a7a9a" stroke-width="0.9"/><path d="M8 2.5v2.5h2.5" fill="#dfe6f2" stroke="#6a7a9a" stroke-width="0.7"/><path d="M2.5 0l.9 1.8 1.9.3-1.4 1.3.4 1.9-1.8-1-1.7 1 .3-1.9-1.4-1.3 2-.3z" fill="#ffe640" stroke="#c9a800" stroke-width="0.4"/></g>
<g transform="translate(28 39) scale(0.93 0.85)"><path d="M0.5 3h4l1 1.2h4.5v7h-9.500z" fill="#ecc050" stroke="#b08818" stroke-width="0.8"/><path d="M0.5 11.200l2-5h9l-2 5z" fill="#fde290" stroke="#a87808" stroke-width="0.8"/><path d="M8 1.500q2-1 3 1" stroke="#5b6f93" stroke-width="0.8" fill="none"/></g>
<g transform="translate(43 39) scale(0.93 0.85)"><rect x="0.5" y="1.500" width="10" height="10" fill="#4454d4" stroke="#2c3aa8" stroke-width="0.8"/><rect x="2.5" y="1.500" width="6" height="4.500" fill="#f0f2ff"/><rect x="3" y="7.500" width="5" height="4" fill="#d0d6f8"/><rect x="6.2" y="8.2" width="1.200" height="2.600" fill="#3444c0"/></g>
<g transform="translate(57 39) scale(0.93 0.85)"><rect x="0.5" y="4" width="4.2" height="7.500" rx="1" fill="#3a5cd4"/><rect x="6.3" y="4" width="4.2" height="7.500" rx="1" fill="#3a5cd4"/><rect x="1.300" y="1.500" width="2.800" height="3" fill="#5a78e0"/><rect x="7" y="1.500" width="2.800" height="3" fill="#5a78e0"/><rect x="4.500" y="5" width="2" height="2.500" fill="#1a2a90"/><rect x="1.300" y="5.500" width="1.500" height="4" fill="#e0e8ff"/><rect x="7.100" y="5.500" width="1.500" height="4" fill="#e0e8ff"/></g>
<g transform="translate(72 39) scale(0.93 0.85)"><path d="M1 1.500h5.500l2 2v8h-7.500z" fill="#fff" stroke="#6a7a9a" stroke-width="0.9"/><circle cx="6.500" cy="7" r="2.600" fill="#e4ecf8" stroke="#50586a" stroke-width="0.9"/><path d="M8.500 9l2.500 2.500" stroke="#d08020" stroke-width="1.500"/></g>
<g transform="translate(86 39) scale(0.93 0.85)"><path d="M3 1.500h6l-1 3.500h-6z" fill="#fff" stroke="#8a92a6" stroke-width="0.700"/><path d="M0.500 6l1.500-1.500h8.500l0.500 1.500v4h-11z" fill="#d8dce6" stroke="#70788c" stroke-width="0.800"/><rect x="1.500" y="9" width="8.500" height="2.500" fill="#f4f4f4" stroke="#70788c" stroke-width="0.600"/><rect x="6.500" y="7" width="3" height="1.300" fill="#28b040"/></g>
<path d="M100.5 37V50" stroke="#7e8ca8" stroke-width="1"/><path d="M101.5 37V50" stroke="#d9e0ee" stroke-width="1" opacity="0.7"/>
<g transform="translate(105 39) scale(0.93 0.85)"><path d="M2.500 1l3.500 7M6.500 1l-3.500 7" stroke="#9098aa" stroke-width="1"/><circle cx="2.300" cy="9.500" r="1.600" fill="none" stroke="#9098aa" stroke-width="1"/><circle cx="6.800" cy="9.500" r="1.600" fill="none" stroke="#9098aa" stroke-width="1"/></g>
<g transform="translate(119 39) scale(0.93 0.85)"><path d="M0.500 1h5l1.500 1.500v6h-6.500z" fill="#eef2ff" stroke="#3050c0" stroke-width="0.900"/><path d="M4 4h5l1.500 1.500v6h-6.500z" fill="#fff" stroke="#2040b8" stroke-width="0.900"/><path d="M5.500 7h3.500M5.500 9h3.500" stroke="#6080e0" stroke-width="0.800"/></g>
<g transform="translate(134 39) scale(0.93 0.85)"><rect x="0.500" y="2" width="8" height="9" fill="#bcc2d0" stroke="#9aa2b4" stroke-width="0.800"/><rect x="2.500" y="0.800" width="4" height="2.200" fill="#aab0c0"/><path d="M4.500 5h5l1.500 1.500v5h-6.500z" fill="#d6dae4" stroke="#9aa2b4" stroke-width="0.800"/></g>
<path d="M148.5 37V50" stroke="#7e8ca8" stroke-width="1"/><path d="M149.5 37V50" stroke="#d9e0ee" stroke-width="1" opacity="0.7"/>
<g transform="translate(153 39) scale(0.93 0.85)"><path d="M2 4.500q4-3.500 6 0q1.500 3-2.500 6" stroke="#8e96aa" stroke-width="1.600" fill="none"/><polygon points="0.500,2 5,3 1.500,6.500" fill="#8e96aa"/></g>
<polygon points="165.8,43 170.2,43 168,45.5" fill="#69728a"/>
<g transform="translate(175 39) scale(0.93 0.85)"><path d="M8 4.500q-4-3.500-6 0q-1.500 3 2.500 6" stroke="#8e96aa" stroke-width="1.600" fill="none"/><polygon points="9.500,2 5,3 8.500,6.500" fill="#8e96aa"/></g>
<polygon points="187.3,43 191.7,43 189.5,45.5" fill="#69728a"/>
<path d="M195.5 37V50" stroke="#7e8ca8" stroke-width="1"/><path d="M196.5 37V50" stroke="#d9e0ee" stroke-width="1" opacity="0.7"/>
<g transform="translate(199.5 39) scale(0.93 0.85)"><path d="M2.700 7l-1.700-2q-0.700-0.800 0-1.300q0.700-0.400 1.400 0.400l0.800 0.900v-3.200q0-0.800 0.700-0.800t0.700 0.800v-0.800q0-0.800 0.700-0.800t0.700 0.800v0.500q0-0.700 0.700-0.700t0.700 0.800v0.900q0-0.600 0.700-0.600t0.700 0.800v4.300q0 3.700-3.300 3.700q-2.200 0-3.100-2z" fill="#fff" stroke="#1f6f78" stroke-width="0.900"/><path d="M4.600 1.800v3.400M6 1.500v3.700M7.400 2.500v2.700" stroke="#1f6f78" stroke-width="0.600"/></g>
<g transform="translate(215 39) scale(0.93 0.85)"><path d="M1 1v8.500l2-2 1.800 3.500 1.400-0.700-1.700-3.300h2.800z" fill="#dfe3ea" stroke="#8a92a6" stroke-width="0.800"/></g>
<polygon points="227.3,43 231.7,43 229.5,45.5" fill="#111"/>
<path d="M235.5 37V50" stroke="#7e8ca8" stroke-width="1"/><path d="M236.5 37V50" stroke="#d9e0ee" stroke-width="1" opacity="0.7"/>
<g transform="translate(240 39) scale(0.93 0.85)"><rect x="0.5" y="1" width="10.5" height="9" fill="#fff" stroke="#3a58b0" stroke-width="1"/><rect x="1" y="1.5" width="9.5" height="2" fill="#2c50c8"/><path d="M3 5.500h2.500v3h3" stroke="#b89020" stroke-width="1" fill="none"/><rect x="5.500" y="5" width="3.500" height="3" fill="#f4e8a0" stroke="#b09030" stroke-width="0.500"/></g>
<g transform="translate(254 39) scale(0.93 0.85)"><rect x="0.5" y="1" width="10.5" height="9" fill="#fff" stroke="#3a58b0" stroke-width="1"/><rect x="1" y="1.5" width="9.5" height="2" fill="#2c50c8"/><path d="M1.500 8l2-2.500" stroke="#20a030" stroke-width="1.500"/><circle cx="3" cy="5.500" r="1.400" fill="#30c040"/><path d="M5.500 5l4 4M9.500 5l-4 4" stroke="#9098aa" stroke-width="0.900"/></g>
<g transform="translate(269 39) scale(0.93 0.85)"><rect x="0.5" y="1" width="10.5" height="9" fill="#e8eeff" stroke="#3a58b0" stroke-width="1"/><rect x="1" y="1.5" width="9.5" height="2" fill="#2c50c8"/><path d="M7.500 8.500q-4 0.500-4-2.500M3.500 6l-1.500 0.500M3.500 6l1.500 1" stroke="#2858d0" stroke-width="1.300" fill="none"/><path d="M6 5.500q2.500 0 2 3" stroke="#2858d0" stroke-width="1.300" fill="none"/></g>
<g transform="translate(283 39) scale(0.93 0.85)"><rect x="0.5" y="1" width="10.5" height="9" fill="#fff" stroke="#3a58b0" stroke-width="1"/><rect x="1" y="1.5" width="9.5" height="2" fill="#2c50c8"/><path d="M10 5l-4 4.500h4z" fill="#c8ccd8"/></g>
<path d="M297.5 37V50" stroke="#7e8ca8" stroke-width="1"/><path d="M298.5 37V50" stroke="#d9e0ee" stroke-width="1" opacity="0.7"/>
<g transform="translate(302 39) scale(0.93 0.85)"><rect x="0.500" y="0.800" width="9.500" height="8" fill="#f2f4fa" stroke="#3a58b0" stroke-width="1"/><rect x="1" y="1.300" width="8.500" height="1.800" fill="#2c50c8"/><rect x="2" y="4.500" width="4" height="3" fill="#e0e4f0" stroke="#8a92a6" stroke-width="0.500"/><rect x="4.500" y="5.500" width="7" height="6" fill="#ffd820" stroke="#c09000" stroke-width="0.700"/><path d="M6.800 5.500v6M9.200 5.500v6M4.500 7.500h7M4.500 9.500h7" stroke="#c09000" stroke-width="0.500"/></g>
<g transform="translate(317 39) scale(0.93 0.85)"><rect x="0.5" y="1" width="10.5" height="9" fill="#d2d6de" stroke="#a3a9b8" stroke-width="1"/><rect x="1" y="1.5" width="9.5" height="2" fill="#b7bdc9"/><path d="M2 5h7M2 7h7M4 4v5M7 4v5" stroke="#b4bac8" stroke-width="0.600"/></g>
<g transform="translate(331 39) scale(0.93 0.85)"><rect x="0.5" y="1" width="10.5" height="9" fill="#d2d6de" stroke="#a3a9b8" stroke-width="1"/><rect x="1" y="1.5" width="9.5" height="2" fill="#b7bdc9"/><rect x="3" y="4.500" width="5" height="3" fill="#e2e5ec" stroke="#aab0c0" stroke-width="0.500"/><path d="M7 8.500l2 2.500" stroke="#aab0c0" stroke-width="1"/></g>
<g transform="translate(345 39) scale(0.93 0.85)"><rect x="0.5" y="1" width="10.5" height="9" fill="#d2d6de" stroke="#a3a9b8" stroke-width="1"/><rect x="1" y="1.5" width="9.5" height="2" fill="#b7bdc9"/><rect x="3" y="4.500" width="5" height="3" fill="#e2e5ec" stroke="#aab0c0" stroke-width="0.500"/><path d="M7 8.500l2 2.500" stroke="#aab0c0" stroke-width="1"/></g>
<path d="M359.5 37V50" stroke="#7e8ca8" stroke-width="1"/><path d="M360.5 37V50" stroke="#d9e0ee" stroke-width="1" opacity="0.7"/>
<g transform="translate(364 39) scale(0.93 0.85)"><rect x="0.3" y="1.0" width="3" height="2.600" fill="#111"/><rect x="3.9" y="1.0" width="3" height="2.600" fill="#111"/><rect x="7.5" y="1.0" width="3" height="2.600" fill="#111"/><rect x="0.3" y="4.4" width="3" height="2.600" fill="#111"/><rect x="3.9" y="4.4" width="3" height="2.600" fill="#111"/><rect x="7.5" y="4.4" width="3" height="2.600" fill="#111"/><rect x="0.3" y="7.8" width="3" height="2.600" fill="#111"/><rect x="3.9" y="7.8" width="3" height="2.600" fill="#111"/><rect x="7.5" y="7.8" width="3" height="2.600" fill="#111"/></g>
<polygon points="377.3,43 381.7,43 379.5,45.5" fill="#111"/>
<g transform="translate(386 39) scale(0.93 0.85)"><path d="M1 1.500h4l1 1h-5z" fill="#5a8ae0"/><rect x="0.500" y="2.500" width="10" height="8.500" fill="#050505" stroke="#3a58b0" stroke-width="0.700"/><rect x="0.500" y="10.500" width="10" height="1" fill="#4868c8"/><circle cx="6.500" cy="6.500" r="1.200" fill="#c02020"/></g>
<g transform="translate(400 39) scale(0.93 0.85)"><rect x="2" y="3" width="9" height="8" fill="#f4f8ff" stroke="#3a58b0" stroke-width="1"/><rect x="2.500" y="3.500" width="8" height="1.800" fill="#2c50c8"/><path d="M2.500 0l.9 1.800 1.900.3-1.400 1.300.4 1.900-1.800-1-1.700 1 .3-1.900-1.400-1.300 2-.3z" fill="#ffe640" stroke="#c9a800" stroke-width="0.400"/></g>
<g transform="translate(415 39) scale(0.93 0.85)"><rect x="0.500" y="1" width="7" height="6" fill="#f4f8ff" stroke="#3a58b0" stroke-width="0.900"/><rect x="1" y="1.500" width="6" height="1.500" fill="#2c50c8"/><rect x="3.500" y="4.500" width="7.500" height="6.500" fill="#e8a020" stroke="#3a58b0" stroke-width="0.900"/><rect x="4" y="5" width="6.500" height="1.500" fill="#2c50c8"/><rect x="5.500" y="8" width="3.500" height="2.500" fill="#7a4010"/></g>
<g transform="translate(429 39) scale(0.93 0.85)"><rect x="0.500" y="1" width="7" height="6" fill="#d2d6de" stroke="#a3a9b8" stroke-width="0.900"/><path d="M1 3h6M3 1v6M5 1v6" stroke="#a3a9b8" stroke-width="0.600"/><rect x="3.500" y="5" width="7.500" height="6.500" fill="#d8dce4" stroke="#989eb0" stroke-width="0.900"/><rect x="5.500" y="7.500" width="3.500" height="2.500" fill="#b4bac8"/></g>
<g transform="translate(444 39) scale(0.93 0.85)"><rect x="0.5" y="1" width="10.5" height="9" fill="#d2d6de" stroke="#a3a9b8" stroke-width="1"/><rect x="1" y="1.5" width="9.5" height="2" fill="#b7bdc9"/><rect x="5" y="6.500" width="4.500" height="4.500" fill="#aab0c0"/><path d="M6 6.500v-1.500q1.200-1.500 2.500 0v1.500" stroke="#aab0c0" stroke-width="0.900" fill="none"/></g>
<g transform="translate(458 39) scale(0.93 0.85)"><rect x="1.500" y="1.500" width="9" height="9.500" fill="#eef0f4" stroke="#a3a9b8" stroke-width="0.800"/><circle cx="6.500" cy="6.500" r="3" fill="#fff" stroke="#b8bcc8" stroke-width="0.700"/><path d="M6.500 6.500h2" stroke="#8a90a0" stroke-width="0.700"/><path d="M1.200 7.500l2.500-4" stroke="#109020" stroke-width="1.600"/><circle cx="3.200" cy="4" r="1.600" fill="#30c040"/></g>
<polygon points="471.8,43 476.2,43 474,45.5" fill="#111"/>
<g transform="translate(481 39) scale(0.93 0.85)"><rect x="0.5" y="1" width="10.5" height="9" fill="#d2d6de" stroke="#a3a9b8" stroke-width="1"/><rect x="1" y="1.5" width="9.5" height="2" fill="#b7bdc9"/><path d="M0 8h5M0 8l2-2M0 8l2 2" stroke="#9aa0b0" stroke-width="1.300" fill="none"/></g>
<g transform="translate(495 39) scale(0.93 0.85)"><rect x="0.5" y="1" width="10.5" height="9" fill="#d2d6de" stroke="#a3a9b8" stroke-width="1"/><rect x="1" y="1.5" width="9.5" height="2" fill="#b7bdc9"/><path d="M11.500 8h-5M11.500 8l-2-2M11.500 8l-2 2" stroke="#9aa0b0" stroke-width="1.300" fill="none"/></g>
<polygon points="507.8,43 512.2,43 510,45.5" fill="#7a8298"/>
<path d="M516 37V50" stroke="#7e8ca8" stroke-width="1"/><path d="M517 37V50" stroke="#d9e0ee" stroke-width="1" opacity="0.7"/>
<g transform="translate(520 39) scale(0.93 0.85)"><rect x="0.5" y="1" width="10.5" height="9" fill="#f4f6fa" stroke="#5a6890" stroke-width="1"/><rect x="1" y="1.5" width="9.5" height="2" fill="#6a86d8"/><path d="M2 5.500h7M2 7.300h7M2 9h7" stroke="#9aa2b8" stroke-width="0.800"/></g>
<g transform="translate(535 39) scale(0.93 0.85)"><rect x="0.5" y="1" width="10.5" height="9" fill="#fff" stroke="#3a58b0" stroke-width="1"/><rect x="1" y="1.5" width="9.5" height="2" fill="#2c50c8"/><rect x="1.800" y="4.300" width="2" height="1.800" fill="#e02020"/><rect x="1.800" y="7" width="2" height="1.800" fill="#2040d0"/><path d="M5 5.200h4.500M5 8h4.500" stroke="#60688a" stroke-width="0.800"/></g>
<g transform="translate(549 39) scale(0.93 0.85)"><rect x="0.5" y="1" width="10.5" height="9" fill="#f8f9fc" stroke="#5a6890" stroke-width="1"/><rect x="1" y="1.5" width="9.5" height="2" fill="#6a86d8"/><path d="M1 5.500h9.500M1 7.500h9.500M4 3.500v6.500M7.500 3.500v6.500" stroke="#a8b0c4" stroke-width="0.600"/></g>
<polygon points="562.8,43 567.2,43 565,45.5" fill="#111"/>
<g transform="translate(572 39) scale(0.93 0.85)"><rect x="0.500" y="1.500" width="9.500" height="9" fill="#fff" stroke="#3a58b0" stroke-width="1"/><path d="M2 9h6.500M3 9l2-5 2 5" stroke="#222" stroke-width="0.800" fill="none"/></g>
<g transform="translate(586 39) scale(0.93 0.85)"><rect x="0.500" y="1.500" width="10" height="9" fill="#fff" stroke="#3a58b0" stroke-width="1"/><path d="M2 9h7M3 9v-3M4.500 9v-5M6 9v-2M7.500 9v-4" stroke="#2848d0" stroke-width="0.900" fill="none"/></g>
<g transform="translate(600 39) scale(0.93 0.85)"><rect x="0.5" y="1" width="10.5" height="9" fill="#f4f0e0" stroke="#6a7290" stroke-width="1"/><rect x="1" y="1.5" width="9.5" height="2" fill="#8a96b8"/><rect x="5.500" y="4" width="4.500" height="6" fill="#f0c040"/><path d="M1 5.500h9.500M1 7.500h9.500M3.500 3.500v6.500M6.500 3.500v6.500" stroke="#8a90a8" stroke-width="0.600"/></g>
<path d="M614.5 37V50" stroke="#7e8ca8" stroke-width="1"/><path d="M615.5 37V50" stroke="#d9e0ee" stroke-width="1" opacity="0.7"/>
<g transform="translate(619 39) scale(0.93 0.85)"><path d="M1 10.500l1.500-5.500 3-2 4 1 1 3-1.500 3.500z" fill="#f4e060" stroke="#b09820" stroke-width="0.600"/><rect x="3.500" y="0.500" width="3" height="2.500" fill="#e8c030"/><path d="M4 5l6.500 6" stroke="#222" stroke-width="1.600"/></g>
<rect x="632.5" y="38" width="1.2" height="1.2" fill="#6d7b98"/>
<rect x="650.5" y="38" width="1.2" height="1.2" fill="#6d7b98"/>
<path d="M633.5 41V50" stroke="#aeb9d0" stroke-width="1"/><path d="M634.5 41V50" stroke="#d9e0ee" stroke-width="1" opacity="0.7"/>
<text x="638.6" y="48.2" font-size="10.5" font-family="Liberation Sans, sans-serif" fill="#1010d0" stroke="#1010d0" stroke-width="0.35" textLength="6.2" lengthAdjust="spacingAndGlyphs">P</text>
<g transform="translate(653 39) scale(0.93 0.85)"><rect x="0.500" y="4" width="8" height="5.500" rx="1" fill="#a8b0b0" stroke="#808a8a" stroke-width="0.600"/><circle cx="4.500" cy="6.800" r="1.800" fill="#d4dada" stroke="#788080" stroke-width="0.600"/><rect x="2.500" y="3" width="2.500" height="1.200" fill="#808a8a"/></g>
<g transform="translate(666 39) scale(0.93 0.85)"><circle cx="2.500" cy="2.800" r="1.900" fill="#111"/><circle cx="6.500" cy="2.800" r="1.900" fill="#111"/><rect x="1" y="4" width="7" height="4.500" fill="#111"/><path d="M8 6l2.500-1.500v4z" fill="#111"/><path d="M3 8.500l-1.500 3M6 8.500l1.500 3" stroke="#111" stroke-width="0.900"/><circle cx="9" cy="9.500" r="2.400" fill="#e01010"/></g>
<path d="M682.6 46.3h3.8" stroke="#222" stroke-width="0.9"/><polygon points="682.6,47.8 686.4,47.8 684.5,49.8" fill="#222"/>
<rect x="9" y="20.5" width="1.2" height="1.2" fill="#6d7b98"/><rect x="9" y="23.0" width="1.2" height="1.2" fill="#6d7b98"/><rect x="9" y="25.5" width="1.2" height="1.2" fill="#6d7b98"/><rect x="9" y="28.0" width="1.2" height="1.2" fill="#6d7b98"/><rect x="9" y="30.5" width="1.2" height="1.2" fill="#6d7b98"/>
<g transform="translate(13 22) scale(0.93 0.85)"><path d="M0.800 0.800h6l2 2v7.500h-8z" fill="#fbf6c4" stroke="#a8a468" stroke-width="0.700"/><rect x="1.300" y="1.300" width="4.500" height="3" fill="#f4e430"/><path d="M1.500 6h4M1.500 7.500h4" stroke="#d8cc60" stroke-width="0.700"/><path d="M4 4.500h2.500v-2l3.500 3.300-3.500 3.300v-2h-2.500z" fill="#2a8a2a" stroke="#10280c" stroke-width="0.800"/></g>
<path d="M926.5 28.500h4.500" stroke="#16203a" stroke-width="1.600"/>
<rect x="938.800" y="23" width="4.200" height="3.600" fill="none" stroke="#16203a" stroke-width="1"/><rect x="936.800" y="25.200" width="4.200" height="3.600" fill="#c2cce0" stroke="#16203a" stroke-width="1"/><path d="M936.800 25.600h4.200" stroke="#16203a" stroke-width="1.400"/>
<path d="M947.500 23l5 5.500M952.500 23l-5 5.500" stroke="#16203a" stroke-width="1.700"/>
<path d="M9 58l5 5M14 58l-5 5" stroke="#555" stroke-width="1.300"/><path d="M21.500 58l4.500 4.500M26.300 59v3.800h-3.800" stroke="#666" stroke-width="1.100" fill="none"/>
<rect x="10.2" y="78.3" width="2.700" height="2.100" fill="#787878"/><rect x="14.1" y="78.3" width="2.700" height="2.100" fill="#787878"/><rect x="10.2" y="81.5" width="2.700" height="2.100" fill="#787878"/><rect x="14.1" y="81.5" width="2.700" height="2.100" fill="#787878"/>
<g transform="translate(100 76) scale(0.93 0.85)"><rect x="1" y="2.500" width="8.500" height="7" fill="#f4f8ff" stroke="#3a58b0" stroke-width="1"/><rect x="1.500" y="3" width="7.500" height="1.800" fill="#2c50c8"/><path d="M1.500 0l.7 1.400 1.500.2-1.100 1 .3 1.500-1.400-.8-1.400.8.300-1.500-1.100-1 1.500-.2z" fill="#ffe640" stroke="#c9a800" stroke-width="0.400"/></g>
<polygon points="114.5,81 118.9,81 116.7,83.5" fill="#9a9a9a"/>
<path d="M504 78.300l2.500 2.500-2.500 2.500M507.800 78.300l2.500 2.500-2.500 2.500" stroke="#555" stroke-width="1.200" fill="none"/>
<path d="M562.500 82.500l1.800 1.800 1.800-1.800" stroke="#9a9a9a" stroke-width="0.800" fill="none"/>
<g transform="translate(6.300 5)" opacity="0.850"><path d="M0.500 1.500l2.200 1.500 1.800-2.500 1.800 2.500 2.200-1.500-1.200 3.500-2.800 3-2.800-3z" fill="#7f92f2" stroke="#5f74e4" stroke-width="0.500"/><path d="M3 3.500l1.500 3.500 1.500-3.500" stroke="#e4ecff" stroke-width="0.700" fill="none"/></g>
<g>
<defs><linearGradient id="cbg" x1="0" y1="0" x2="0" y2="1"><stop offset="0" stop-color="#dbe6f2"/><stop offset="0.45" stop-color="#aebfd3"/><stop offset="0.5" stop-color="#8ea3bd"/><stop offset="1" stop-color="#b4c8de"/></linearGradient>
<linearGradient id="cbr" x1="0" y1="0" x2="0" y2="1"><stop offset="0" stop-color="#e9a99a"/><stop offset="0.45" stop-color="#d0604a"/><stop offset="0.5" stop-color="#c03a22"/><stop offset="1" stop-color="#d86a3a"/></linearGradient></defs>
<path d="M898 0.500h59.500v8q0 3-3 3h-53.500q-3 0-3-3z" fill="url(#cbg)" stroke="#4a5a70" stroke-width="0.900"/>
<path d="M930 1h27v7.500q0 2.500-2.500 2.500h-24.500z" fill="url(#cbr)"/>
<path d="M914 1v10.500M930 1v10.500" stroke="#4a5a70" stroke-width="0.900"/>
<rect x="902.500" y="6.500" width="6.800" height="1.900" fill="#fff" stroke="#5a6a80" stroke-width="0.500"/>
<rect x="918.600" y="2.800" width="7.400" height="5.600" fill="#fff" stroke="#5a6a80" stroke-width="0.500"/><rect x="920.300" y="4.800" width="4" height="2.200" fill="#66789a"/>
<path d="M941.500 2.900l5.800 5.500M947.300 2.900l-5.800 5.500" stroke="#6a2a20" stroke-width="2.900" opacity="0.450"/><path d="M941.500 2.900l5.800 5.500M947.300 2.900l-5.800 5.500" stroke="#fff" stroke-width="1.800"/>
</g>
<rect x="9" y="475" width="1.2" height="1.2" fill="#6d7b98"/><rect x="9" y="477.5" width="1.2" height="1.2" fill="#6d7b98"/><rect x="9" y="480.0" width="1.2" height="1.2" fill="#6d7b98"/><rect x="9" y="482.5" width="1.2" height="1.2" fill="#6d7b98"/><rect x="9" y="485.0" width="1.2" height="1.2" fill="#6d7b98"/>
<g transform="translate(14 476.5) scale(0.93 0.85)"><rect x="0.500" y="0.500" width="10" height="10" fill="#dfe8fa" stroke="#7a92d0" stroke-width="1"/><circle cx="5.500" cy="5.800" r="3" fill="none" stroke="#f4d820" stroke-width="1.800"/></g>
<g transform="translate(28 476.5) scale(0.93 0.85)"><rect x="0.500" y="0.500" width="9.500" height="8" fill="#fff" stroke="#283898" stroke-width="1"/><rect x="1" y="1" width="8.500" height="1.800" fill="#2838a8"/><rect x="2" y="4" width="3.500" height="3" fill="#d8dcec"/><path d="M4.500 8.500h3.500v-2l3.500 3-3.500 3v-2h-3.500z" fill="#20c8d8" stroke="#107888" stroke-width="0.500"/></g>
<g transform="translate(42 476.5) scale(0.93 0.85)"><circle cx="3" cy="4" r="2" fill="#f0e020"/><circle cx="2.500" cy="8" r="2.200" fill="#f0e020"/><circle cx="6" cy="6.500" r="1.800" fill="#e8d818"/><path d="M5 2.500l6 7.500" stroke="#101060" stroke-width="1.800"/><path d="M7.500 0.500v3M6 2h3" stroke="#c8b010" stroke-width="0.800"/></g>
<g transform="translate(57 476.5) scale(0.93 0.85)"><rect x="0.500" y="0.500" width="9.500" height="9" fill="#f4f4f8" stroke="#283898" stroke-width="1"/><rect x="1" y="1" width="8.500" height="1.800" fill="#2838a8"/><path d="M1 10.500l6-6" stroke="#901010" stroke-width="1.300"/><path d="M5.500 3.500l3 3" stroke="#e8d020" stroke-width="2.200"/></g>
<polygon points="70.3,480 74.7,480 72.5,482.5" fill="#333"/>
<path d="M78 474V487" stroke="#7e8ca8" stroke-width="1"/><path d="M79 474V487" stroke="#d9e0ee" stroke-width="1" opacity="0.7"/>
<g transform="translate(84 476.5) scale(0.93 0.85)"><path d="M0.800 6l4-4.500 4.500 3.500-4 4.500z" fill="#f4ecb0" stroke="#111" stroke-width="1.300"/><path d="M0.800 6l4.500 3.500" stroke="#111" stroke-width="2"/></g>
<g transform="translate(97 476.5) scale(0.93 0.85)"><circle cx="3" cy="3.500" r="2.500" fill="#f4e020" stroke="#8a7a00" stroke-width="0.500"/><circle cx="8" cy="3.500" r="2.500" fill="#f4e020" stroke="#8a7a00" stroke-width="0.500"/><circle cx="3" cy="8.500" r="2.500" fill="#f4e020" stroke="#8a7a00" stroke-width="0.500"/><circle cx="8" cy="8.500" r="2.500" fill="#f4e020" stroke="#8a7a00" stroke-width="0.500"/><path d="M1 2h3.500M2.700 0.300v3.500" stroke="#111" stroke-width="1"/></g>
<g transform="translate(112 476.5) scale(0.93 0.85)"><path d="M0 5.500h5M2.500 3v5" stroke="#111" stroke-width="1.400"/><circle cx="8" cy="5.500" r="2.800" fill="#f4e020" stroke="#222" stroke-width="0.900"/></g>
<g transform="translate(127 476.5) scale(0.93 0.85)"><path d="M3 3q0-2.500 2.500-2.500t2.500 2.200q0 1.500-2.500 2.800" stroke="#111" stroke-width="1.400" fill="none"/><circle cx="2.500" cy="8.500" r="2" fill="none" stroke="#111" stroke-width="1"/><circle cx="8" cy="8.500" r="2" fill="none" stroke="#111" stroke-width="1"/><path d="M4.500 8.500h1.500" stroke="#111" stroke-width="1"/></g>
<g transform="translate(141 476.5) scale(0.93 0.85)"><path d="M1.500 1.500l8 8M9.500 1.500l-8 8M1.500 1.500h8v8h-8z" stroke="#3048c8" stroke-width="0.800" fill="#c8d0f4" fill-opacity="0.600"/><circle cx="1.5" cy="1.5" r="1.500" fill="#2038c0"/><circle cx="9.5" cy="1.5" r="1.500" fill="#2038c0"/><circle cx="1.5" cy="9.5" r="1.500" fill="#2038c0"/><circle cx="9.5" cy="9.5" r="1.500" fill="#2038c0"/><circle cx="5.5" cy="5.5" r="1.500" fill="#2038c0"/></g>
<g transform="translate(156 476.5) scale(0.93 0.85)"><circle cx="5" cy="2.500" r="2" fill="none" stroke="#8a90a0" stroke-width="1"/><circle cx="2.500" cy="8" r="2.200" fill="none" stroke="#8a90a0" stroke-width="1"/><circle cx="7.800" cy="8" r="2.200" fill="none" stroke="#8a90a0" stroke-width="1"/><path d="M4.500 4.500l-1.500 1.800M5.800 4.500l1.300 1.800" stroke="#8a90a0" stroke-width="0.800"/></g>
<g transform="translate(170 476.5) scale(0.93 0.85)"><circle cx="5.500" cy="5.500" r="4.500" fill="#d8dce4" stroke="#8a90a0" stroke-width="0.900"/><circle cx="5.500" cy="5.500" r="2.500" fill="#605800" stroke="#b0a820" stroke-width="0.800"/></g>
<polygon points="183.3,480 187.7,480 185.5,482.5" fill="#333"/>
<path d="M191 474V487" stroke="#7e8ca8" stroke-width="1"/><path d="M192 474V487" stroke="#d9e0ee" stroke-width="1" opacity="0.7"/>
<g transform="translate(195 476.5) scale(0.93 0.85)"><path d="M3 1h5l2.500 4.500-2.500 4.500h-5l-2.500-4.500z" fill="none" stroke="#1828d8" stroke-width="1.500"/></g>
<g transform="translate(210 476.5) scale(0.93 0.85)"><path d="M3 1h5l2.500 4.500-2.500 4.500" fill="none" stroke="#f0e040" stroke-width="1.600"/><path d="M8 10h-5l-2.500-4.500 2.500-4.500" fill="none" stroke="#1828d8" stroke-width="1.500"/></g>
<g transform="translate(224 476.5) scale(0.93 0.85)"><ellipse cx="5" cy="2.800" rx="3.500" ry="1.800" fill="#b8c4f0" stroke="#2838c0" stroke-width="0.900"/><ellipse cx="6.500" cy="7.500" rx="3.800" ry="2.500" fill="#b8c4f0" stroke="#2838c0" stroke-width="0.900"/><path d="M2 4v4.500M1 6h5" stroke="#2838c0" stroke-width="0.900"/></g>
<g transform="translate(239 476.5) scale(0.93 0.85)"><path d="M1.500 1.500l8 8M9.500 1.500l-8 8" stroke="#111" stroke-width="1.600"/><circle cx="1.5" cy="1.5" r="1.400" fill="#2038d0"/><circle cx="9.5" cy="1.5" r="1.400" fill="#2038d0"/><circle cx="1.5" cy="9.5" r="1.400" fill="#2038d0"/><circle cx="9.5" cy="9.5" r="1.400" fill="#2038d0"/><circle cx="5.5" cy="1" r="1.400" fill="#2038d0"/><circle cx="5.5" cy="10" r="1.400" fill="#2038d0"/><circle cx="1" cy="5.5" r="1.400" fill="#2038d0"/><circle cx="10" cy="5.5" r="1.400" fill="#2038d0"/></g>
<g transform="translate(254 476.5) scale(0.93 0.85)"><path d="M1.500 1.500l8 8M9.500 1.500l-8 8" stroke="#111" stroke-width="1.600"/><circle cx="1.5" cy="1.5" r="1.400" fill="#d82020"/><circle cx="9.5" cy="1.5" r="1.400" fill="#d82020"/><circle cx="1.5" cy="9.5" r="1.400" fill="#d82020"/><circle cx="9.5" cy="9.5" r="1.400" fill="#d82020"/><circle cx="5.5" cy="1" r="1.400" fill="#d82020"/><circle cx="5.5" cy="10" r="1.400" fill="#d82020"/><circle cx="1" cy="5.5" r="1.400" fill="#d82020"/><circle cx="10" cy="5.5" r="1.400" fill="#d82020"/></g>
<path d="M268 474V487" stroke="#7e8ca8" stroke-width="1"/><path d="M269 474V487" stroke="#d9e0ee" stroke-width="1" opacity="0.7"/>
<g transform="translate(271 476.5) scale(0.93 0.85)"><path d="M2.500 8.500l5-5.500" stroke="#2838c0" stroke-width="1.400"/><circle cx="2.300" cy="8.700" r="1.900" fill="#c8d0f8" stroke="#2838c0" stroke-width="0.800"/><circle cx="7.800" cy="2.800" r="2" fill="#f4e020" stroke="#a09000" stroke-width="0.500"/></g>
<g transform="translate(286 476.5) scale(0.93 0.85)"><path d="M2 2l8 7M10 2l-8 7M3.500 3.500h5v4.500h-5z" stroke="#2838c0" stroke-width="1.100" fill="none"/><circle cx="1.5" cy="1.5" r="1.300" fill="#f4e020"/><circle cx="10.5" cy="1.5" r="1.300" fill="#f4e020"/><circle cx="1.5" cy="9.5" r="1.300" fill="#f4e020"/><circle cx="10.5" cy="9.5" r="1.300" fill="#f4e020"/></g>
<g transform="translate(302 476.5) scale(0.93 0.85)"><ellipse cx="6.500" cy="3" rx="3.500" ry="2.300" fill="none" stroke="#f0e040" stroke-width="1.300"/><ellipse cx="4" cy="8" rx="3.300" ry="2.200" fill="none" stroke="#555" stroke-width="1"/><path d="M5 5l-0.500 1" stroke="#555" stroke-width="0.800"/></g>
<g transform="translate(316 476.5) scale(0.93 0.85)"><ellipse cx="6.500" cy="3" rx="3.500" ry="2.300" fill="none" stroke="#d82020" stroke-width="1.300"/><ellipse cx="4" cy="8" rx="3.300" ry="2.200" fill="none" stroke="#555" stroke-width="1"/><path d="M5 5l-0.500 1" stroke="#555" stroke-width="0.800"/></g>
<path d="M330 474V487" stroke="#7e8ca8" stroke-width="1"/><path d="M331 474V487" stroke="#d9e0ee" stroke-width="1" opacity="0.7"/>
<g transform="translate(334 476.5) scale(0.93 0.85)"><rect x="0.800" y="2.500" width="8" height="8" fill="#c8d0f4" stroke="#2838c0" stroke-width="1.100"/><path d="M0.800 2.500l2-2h8v8l-2 2M8.800 2.500l2-2M3 0.500v8h8" stroke="#2838c0" stroke-width="0.800" fill="none"/></g>
<g transform="translate(349 476.5) scale(0.93 0.85)"><path d="M5.500 0.500l5 5-5 5-5-5z" fill="#e4e8f0" stroke="#70788c" stroke-width="0.800"/><path d="M5.500 0.500v10M0.500 5.500h10" stroke="#70788c" stroke-width="0.600"/></g>
<g transform="translate(363 476.5) scale(0.93 0.85)"><path d="M0.500 2.500l3 2.500 2-1.500 2 1.500 3-2.500-1 4 1.500 3-3-1.500-2.500 1.500-2.500-1.500-3 1.500 1.500-3z" fill="#e82020" stroke="#a01010" stroke-width="0.600"/><path d="M3 5l5 4M8 5l-5 4" stroke="#f8c020" stroke-width="0.700"/></g>
<polygon points="376.8,480 381.2,480 379,482.5" fill="#333"/>
<g transform="translate(385 476.5) scale(0.93 0.85)"><circle cx="2" cy="8.500" r="1.800" fill="#e8eaf0" stroke="#8088a0" stroke-width="0.700"/><path d="M3 7.500l2-2" stroke="#8088a0" stroke-width="0.800"/></g>
<text x="390" y="481.500" font-size="7" font-family="Liberation Sans, sans-serif" fill="#70788c" font-weight="bold">Fe</text>
<path d="M399.5 474V487" stroke="#7e8ca8" stroke-width="1"/><path d="M400.5 474V487" stroke="#d9e0ee" stroke-width="1" opacity="0.7"/>
<g transform="translate(403 476.5) scale(0.93 0.85)"><rect x="0.500" y="0.500" width="10.500" height="10" fill="#c0c8f8" stroke="#2030c0" stroke-width="1.100"/><path d="M1 1l9.500 9M10.500 1l-9.500 9" stroke="#2030c0" stroke-width="0.800"/><circle cx="5.700" cy="2.800" r="1.700" fill="#f8e820"/><circle cx="5.700" cy="8.300" r="1.700" fill="#f8e820"/><circle cx="2.800" cy="5.500" r="1.600" fill="#111"/><circle cx="8.600" cy="5.500" r="1.600" fill="#111"/></g>
<polygon points="416.8,480 421.2,480 419,482.5" fill="#333"/>
<path d="M425 474V487" stroke="#7e8ca8" stroke-width="1"/><path d="M426 474V487" stroke="#d9e0ee" stroke-width="1" opacity="0.7"/>
<text x="429.500" y="485" font-size="11" font-family="Liberation Serif, serif" fill="#1018c0" font-weight="bold" font-style="italic" textLength="10" lengthAdjust="spacingAndGlyphs">M</text>
<g transform="translate(444 476.5) scale(0.93 0.85)"><rect x="0.500" y="0.500" width="9.500" height="10" fill="#e8ecf8" stroke="#3048c0" stroke-width="1.100"/><circle cx="4" cy="4" r="2" fill="#e03030"/><circle cx="6" cy="6.500" r="2.600" fill="#20a098"/></g>
<path d="M459.6 483.5h3.8" stroke="#222" stroke-width="0.9"/><polygon points="459.6,485.0 463.4,485.0 461.5,487.0" fill="#222"/>
<rect x="469" y="475" width="1.2" height="1.2" fill="#6d7b98"/><rect x="469" y="477.5" width="1.2" height="1.2" fill="#6d7b98"/><rect x="469" y="480.0" width="1.2" height="1.2" fill="#6d7b98"/><rect x="469" y="482.5" width="1.2" height="1.2" fill="#6d7b98"/><rect x="469" y="485.0" width="1.2" height="1.2" fill="#6d7b98"/>
<rect x="472" y="473" width="14.500" height="15" fill="#fbeaae" stroke="#e8cf80" stroke-width="0.600" rx="1"/>
<g transform="translate(476.5 476.5) scale(0.93 0.85)"><path d="M0.800 0.500v8.500l2-2 1.800 3.500 1.400-0.700-1.700-3.300h2.800z" fill="#fff" stroke="#111" stroke-width="0.900"/></g>
<g transform="translate(488 476.5) scale(0.93 0.85)"><circle cx="5.500" cy="5.500" r="2.800" fill="none" stroke="#111" stroke-width="1"/><path d="M5.500 0v11M0 5.500h11" stroke="#111" stroke-width="1"/><path d="M5.500 -0.500l-1.800 2.300h3.600zM5.500 11.500l-1.800-2.300h3.600zM-0.500 5.500l2.300-1.800v3.600zM11.500 5.500l-2.300-1.800v3.600z" fill="#111"/></g>
<g transform="translate(503 476.5) scale(0.93 0.85)"><path d="M8.500 3a4 4 0 1 0 1.200 3.500" fill="none" stroke="#111" stroke-width="1.500"/><path d="M6 0.300l4.200 0.500-1.500 3.800z" fill="#111"/></g>
<g transform="translate(517 476.5) scale(0.93 0.85)"><path d="M5.500 0.500v10M0.500 5.500h10" stroke="#111" stroke-width="1.300"/><path d="M5.500 -0.500l-2.200 2.800h4.400zM5.500 11.500l-2.200-2.800h4.400zM-0.500 5.500l2.800-2.200v4.400zM11.500 5.500l-2.800-2.200v4.400z" fill="#111"/></g>
<g transform="translate(531 476.5) scale(0.93 0.85)"><path d="M0.800 3.500v-2.700h2.700M7.500 0.800h2.700v2.700M10.200 7.500v2.700h-2.700M3.500 10.200h-2.700v-2.700" stroke="#111" stroke-width="1.300" fill="none"/><rect x="3.500" y="3.500" width="4" height="4" fill="none" stroke="#111" stroke-width="1"/><path d="M1 1l2.500 2.500M10 1l-2.500 2.500M1 10l2.500-2.500M10 10l-2.500-2.500" stroke="#111" stroke-width="0.900"/></g>
<g transform="translate(546 476.5) scale(0.93 0.85)"><path d="M10.500 1.500l-9.500 4 9.500 4" fill="none" stroke="#111" stroke-width="1.400"/><path d="M7 3.500q1.500 2 0 4.500" fill="none" stroke="#111" stroke-width="0.900"/></g>
<g transform="translate(561 476.5) scale(0.93 0.85)"><path d="M5.500 0.500l3.500 3h-2v2.500h2.500l-4 3-4-3h2.500v-2.500h-2l3.500-3z" fill="none" stroke="#111" stroke-width="1.100"/><path d="M0.500 10.500h10" stroke="#111" stroke-width="1.200"/></g>
<g transform="translate(575 476.5) scale(0.93 0.85)"><circle cx="5.500" cy="5" r="2.600" fill="#111"/><path d="M5.500 0v2M5.500 8v3M0.500 5h2M8.500 5h2M2 1.500l1.500 1.500M9 1.500l-1.500 1.500M2 8.500l1.500-1.500M9 8.500l-1.500-1.500" stroke="#111" stroke-width="0.900" stroke-dasharray="1 0.700"/><path d="M2 10.500h7" stroke="#111" stroke-width="1.200"/></g>
<g transform="translate(589 476.5) scale(0.93 0.85)"><path d="M1 5q0-4 3.500-4t3.500 3.500" fill="none" stroke="#8d95a8" stroke-width="1.300"/><path d="M3.500 1v5M1.500 3.500h4" stroke="#8d95a8" stroke-width="0.900"/><rect x="5.500" y="4" width="4.500" height="7" fill="#b4bac8" stroke="#8d95a8" stroke-width="0.600"/></g>
<g transform="translate(603 476.5) scale(0.93 0.85)"><path d="M1 5q0-4 3.500-4t3.500 3.500" fill="none" stroke="#8d95a8" stroke-width="1.300"/><path d="M3.500 1v5M1.500 3.500h4" stroke="#8d95a8" stroke-width="0.900"/><rect x="5" y="4" width="3" height="7" fill="#a8aebc"/><rect x="8" y="5.500" width="3" height="5.500" fill="#9aa0b0"/></g>
<path d="M619.6 483.5h3.8" stroke="#222" stroke-width="0.9"/><polygon points="619.6,485.0 623.4,485.0 621.5,487.0" fill="#222"/>
<rect x="629" y="475" width="1.2" height="1.2" fill="#6d7b98"/><rect x="629" y="477.5" width="1.2" height="1.2" fill="#6d7b98"/><rect x="629" y="480.0" width="1.2" height="1.2" fill="#6d7b98"/><rect x="629" y="482.5" width="1.2" height="1.2" fill="#6d7b98"/><rect x="629" y="485.0" width="1.2" height="1.2" fill="#6d7b98"/>
<g transform="translate(634 476.5) scale(0.93 0.85)"><path d="M0.800 0.500v10h10M3 10.500v-6M5 10.500v-6M7 10.500v-6M9 10.500v-6" stroke="#222" stroke-width="0.900" fill="none"/></g>
<g transform="translate(648 476.5) scale(0.93 0.85)"><path d="M5.500 0.800l4.800 9.400h-9.600z" fill="none" stroke="#222" stroke-width="1.100"/></g>
<g transform="translate(662 476.5) scale(0.93 0.85)"><circle cx="4" cy="7.500" r="2.800" fill="none" stroke="#111" stroke-width="1.300"/><path d="M5.500 5l4.500-4.500M7 1l1 2.500M3.500 0.500l1.500 3.500" stroke="#111" stroke-width="1.300"/></g>
<g transform="translate(677 476.5) scale(0.93 0.85)"><path d="M0.800 7l5.500-5.500 4.200 1-1 3.500-5.500 4.500z" fill="#f0f2f6" stroke="#111" stroke-width="1.100"/><path d="M3 7.500l5-4" stroke="#111" stroke-width="0.900"/></g>
<path d="M692.6 483.5h3.8" stroke="#222" stroke-width="0.9"/><polygon points="692.6,485.0 696.4,485.0 694.5,487.0" fill="#222"/>
<rect x="954" y="499.5" width="1.400" height="1.400" fill="#d8dce8"/><rect x="951.5" y="499.5" width="1.400" height="1.400" fill="#d8dce8"/><rect x="949" y="499.5" width="1.400" height="1.400" fill="#d8dce8"/><rect x="954" y="497.0" width="1.400" height="1.400" fill="#d8dce8"/><rect x="951.5" y="497.0" width="1.400" height="1.400" fill="#d8dce8"/><rect x="954" y="494.5" width="1.400" height="1.400" fill="#d8dce8"/></svg>
<span class="t" style="left:19.40px;top:3.20px;font-size:9.2px;color:#000;transform:scaleX(0.8708);">Diamond - [COD-1500005-molecules.diamdoc]</span>
<span class="t" style="left:27.70px;top:20.60px;font-size:9px;color:#1a1a2a;transform:scaleX(0.8129);"><u>F</u>ile</span>
<span class="t" style="left:49.90px;top:20.60px;font-size:9px;color:#1a1a2a;transform:scaleX(0.8628);"><u>E</u>dit</span>
<span class="t" style="left:73.80px;top:20.60px;font-size:9px;color:#1a1a2a;transform:scaleX(0.8471);"><u>V</u>iew</span>
<span class="t" style="left:101.20px;top:20.60px;font-size:9px;color:#1a1a2a;transform:scaleX(0.8595);"><u>S</u>tructure</span>
<span class="t" style="left:143.10px;top:20.60px;font-size:9px;color:#1a1a2a;transform:scaleX(0.8705);"><u>P</u>icture</span>
<span class="t" style="left:178.00px;top:20.60px;font-size:9px;color:#1a1a2a;transform:scaleX(0.8686);"><u>B</u>uild</span>
<span class="t" style="left:206.40px;top:20.60px;font-size:9px;color:#1a1a2a;transform:scaleX(0.8647);"><u>O</u>bjects</span>
<span class="t" style="left:243.80px;top:20.60px;font-size:9px;color:#1a1a2a;transform:scaleX(0.8358);"><u>M</u>ove</span>
<span class="t" style="left:273.70px;top:20.60px;font-size:9px;color:#1a1a2a;transform:scaleX(0.8517);"><u>T</u>ools</span>
<span class="t" style="left:303.60px;top:20.60px;font-size:9px;color:#1a1a2a;transform:scaleX(0.9027);"><u>W</u>indow</span>
<span class="t" style="left:343.50px;top:20.60px;font-size:9px;color:#1a1a2a;transform:scaleX(0.8317);"><u>H</u>elp</span>
<span class="t" style="left:39.90px;top:54.20px;font-size:8.8px;color:#8a8a8a;transform:scaleX(0.8392);">No.</span>
<span class="t" style="left:53.80px;top:54.20px;font-size:8.8px;color:#1e1e1e;transform:scaleX(0.6930);-webkit-text-stroke:0.3px #1e1e1e;">1</span>
<span class="t" style="left:66.30px;top:54.20px;font-size:8.8px;color:#8a8a8a;transform:scaleX(0.8897);">Title</span>
<span class="t" style="left:82.80px;top:54.20px;font-size:8.8px;color:#1e1e1e;transform:scaleX(0.8058);-webkit-text-stroke:0.3px #1e1e1e;">1500005</span>
<span class="t" style="left:118.80px;top:54.20px;font-size:8.8px;color:#8a8a8a;transform:scaleX(0.8060);">Pics</span>
<span class="t" style="left:134.30px;top:54.20px;font-size:8.8px;color:#1e1e1e;transform:scaleX(0.6930);-webkit-text-stroke:0.3px #1e1e1e;">1</span>
<span class="t" style="left:146.60px;top:54.20px;font-size:8.8px;color:#8a8a8a;transform:scaleX(0.8511);">Code</span>
<span class="t" style="left:166.50px;top:54.20px;font-size:8.8px;color:#1e1e1e;transform:scaleX(0.8146);-webkit-text-stroke:0.3px #1e1e1e;">1500005</span>
<span class="t" style="left:202.40px;top:54.20px;font-size:8.8px;color:#8a8a8a;transform:scaleX(0.8845);">Formula sum</span>
<span class="t" style="left:250.70px;top:54.20px;font-size:8.8px;color:#1e1e1e;transform:scaleX(0.8424);-webkit-text-stroke:0.3px #1e1e1e;">As3 Co2 H47 N12 O16</span>
<span class="t" style="left:335.00px;top:54.20px;font-size:8.8px;color:#8a8a8a;transform:scaleX(0.8955);">HM symbol</span>
<span class="t" style="left:377.40px;top:54.20px;font-size:8.8px;color:#1e1e1e;transform:scaleX(0.8566);-webkit-text-stroke:0.3px #1e1e1e;">P c c n</span>
<span class="t" style="left:408.30px;top:54.20px;font-size:8.8px;color:#8a8a8a;transform:scaleX(0.7822);">SGR no.</span>
<span class="t" style="left:437.20px;top:54.20px;font-size:8.8px;color:#1e1e1e;transform:scaleX(0.8166);-webkit-text-stroke:0.3px #1e1e1e;">56</span>
<span class="t" style="left:453.10px;top:54.20px;font-size:8.8px;color:#8a8a8a;transform:scaleX(0.8616);">Cell parameters</span>
<span class="t" style="left:509.10px;top:54.20px;font-size:8.8px;color:#1e1e1e;transform:scaleX(0.8076);-webkit-text-stroke:0.3px #1e1e1e;">27.453,13.200,14.468,90.00,90.00,90.00</span>
<span class="t" style="left:40.90px;top:75.50px;font-size:8.8px;color:#111;transform:scaleX(0.7927);">Molecules</span>
<span class="t" style="left:522.60px;top:73.90px;font-size:8.8px;color:#111;transform:scaleX(0.8485);">Data sheet</span>
<span class="t" style="left:523.00px;top:327.00px;font-size:8.8px;color:#111;transform:scaleX(0.8480);">Properties</span>
<span class="t" style="left:522.70px;top:340.60px;font-size:8.8px;color:#111;transform:scaleX(0.7930);">Structure picture contents</span>
<span class="t" style="left:718.40px;top:97.90px;font-size:8.4px;color:#000;transform:scaleX(0.9646);font-weight:bold;">General</span>
<span class="t" style="left:527.40px;top:111.70px;font-size:8.4px;color:#000;transform:scaleX(0.8958);font-weight:bold;">Origin</span>
<span class="t" style="left:583.00px;top:111.70px;font-size:8.4px;color:#000;transform:scaleX(0.8483);">COD: 1500005</span>
<span class="t" style="left:527.40px;top:121.70px;font-size:8.4px;color:#000;transform:scaleX(0.9293);font-weight:bold;">Name</span>
<span class="t" style="left:583.00px;top:121.70px;font-size:8.4px;color:#000;transform:scaleX(0.9255);">Hexaammine cobalt(<span style="font-family:'Noto Serif CJK SC',serif;line-height:0;font-weight:500">Ⅲ</span>) hydrogenarseniate tetrahydrate</span>
<span class="t" style="left:701.40px;top:143.50px;font-size:8.4px;color:#000;transform:scaleX(0.8883);font-weight:bold;">Bibliographic data</span>
<span class="t" style="left:527.40px;top:156.70px;font-size:8.4px;color:#000;transform:scaleX(0.8995);font-weight:bold;">Author(s)</span>
<span class="t" style="left:583.00px;top:156.70px;font-size:8.4px;color:#000;transform:scaleX(0.9070);">Ritu Bala, Raj Pal Sharma, Rajni Sharma, Juan M. Salas, Miguel Quiroos, William T.A. Harrison</span>
<span class="t" style="left:527.40px;top:167.70px;font-size:8.4px;color:#000;transform:scaleX(0.8861);font-weight:bold;">Publication</span>
<span class="t" style="left:583.00px;top:167.70px;font-size:8.4px;color:#000;transform:scaleX(0.9290);">Cationic cobaltammines as anion receptors: Synthesis, characterization an X-ray structure of bis-</span>
<span class="t" style="left:527.40px;top:177.70px;font-size:8.4px;color:#000;transform:scaleX(0.9805);font-weight:bold;">title</span>
<span class="t" style="left:583.00px;top:177.70px;font-size:8.4px;color:#000;transform:scaleX(0.9309);">(hexaamminecobalt(<span style="font-family:'Noto Serif CJK SC',serif;line-height:0;font-weight:500">Ⅲ</span>)) tris-(hydrogenarsenate) tetrahydrate</span>
<span class="t" style="left:527.40px;top:187.70px;font-size:8.4px;color:#000;transform:scaleX(0.9047);font-weight:bold;">Citation</span>
<span class="t" style="left:583.00px;top:187.70px;font-size:8.4px;color:#000;transform:scaleX(0.9049);">Journal of Molecular Structure, 828, 174-180 (2007)</span>
<span class="t" style="left:714.60px;top:209.20px;font-size:8.4px;color:#000;transform:scaleX(0.8726);font-weight:bold;">Phase data</span>
<span class="t" style="left:527.40px;top:222.70px;font-size:8.4px;color:#000;transform:scaleX(0.9104);font-weight:bold;">Space-group</span>
<span class="t" style="left:583.00px;top:222.70px;font-size:8.4px;color:#000;transform:scaleX(0.9444);">P c c n (56) - orthorhombic</span>
<span class="t" style="left:583.00px;top:233.70px;font-size:8.4px;color:#000;transform:scaleX(0.8875);">a=27.4534(16) Å b=13.1997(8) Å c=14.4680(8) Å</span>
<span class="t" style="left:527.40px;top:244.70px;font-size:8.4px;color:#000;transform:scaleX(0.8195);font-weight:bold;">Cell</span>
<span class="t" style="left:583.00px;top:243.70px;font-size:8.4px;color:#000;transform:scaleX(0.9142);">a/b=2.0799 b/c=0.9123 c/a=0.5270</span>
<span class="t" style="left:583.00px;top:255.70px;font-size:8.4px;color:#000;transform:scaleX(0.8843);">V=5242.87(53) Å<sup style="font-size:6px;line-height:0;vertical-align:3px">3</sup> Z=8</span>
<span class="t" style="left:602.70px;top:277.50px;font-size:8.4px;color:#000;transform:scaleX(0.9292);font-weight:bold;">Atomic parameters</span>
<span class="t" style="left:527.40px;top:292.40px;font-size:8.4px;color:#000;transform:scaleX(0.9904);font-weight:bold;">Atom</span>
<span class="t" style="left:552.30px;top:292.40px;font-size:8.4px;color:#000;transform:scaleX(0.9184);font-weight:bold;">Wyck.</span>
<span class="t" style="left:578.20px;top:292.40px;font-size:8.4px;color:#000;transform:scaleX(0.9496);font-weight:bold;">Site</span>
<span class="t" style="left:607.80px;top:292.40px;font-size:8.4px;color:#000;transform:scaleX(1.0123);font-weight:bold;">x/a</span>
<span class="t" style="left:649.70px;top:292.40px;font-size:8.4px;color:#000;transform:scaleX(1.0157);font-weight:bold;">y/b</span>
<span class="t" style="left:693.00px;top:292.40px;font-size:8.4px;color:#000;transform:scaleX(1.0101);font-weight:bold;">z/c</span>
<span class="t" style="left:722.60px;top:292.40px;font-size:8.4px;color:#000;transform:scaleX(0.9675);font-weight:bold;">U [Å<sup style="font-size:6px;line-height:0;vertical-align:3px">2</sup>]</span>
<span class="t" style="left:529.00px;top:303.40px;font-size:8.4px;color:#000;transform:scaleX(0.8035);">As1</span>
<span class="t" style="left:554.30px;top:303.40px;font-size:8.4px;color:#000;transform:scaleX(0.8898);">8e</span>
<span class="t" style="left:580.50px;top:303.40px;font-size:8.4px;color:#000;transform:scaleX(0.7492);">1</span>
<span class="t" style="left:598.00px;top:303.40px;font-size:8.4px;color:#000;transform:scaleX(0.8589);">0.13009(1)</span>
<span class="t" style="left:637.50px;top:303.40px;font-size:8.4px;color:#000;transform:scaleX(0.8688);">0.47924(2)</span>
<span class="t" style="left:680.70px;top:303.40px;font-size:8.4px;color:#000;transform:scaleX(0.8713);">0.52012(1)</span>
<span class="t" style="left:529.00px;top:313.80px;font-size:8.4px;color:#000;transform:scaleX(0.7622);clip-path:inset(0 0 4.2px 0);">O11</span>
<span class="t" style="left:554.30px;top:313.80px;font-size:8.4px;color:#000;transform:scaleX(0.8898);clip-path:inset(0 0 4.2px 0);">8e</span>
<span class="t" style="left:580.50px;top:313.80px;font-size:8.4px;color:#000;transform:scaleX(0.7492);clip-path:inset(0 0 4.2px 0);">1</span>
<span class="t" style="left:598.00px;top:313.80px;font-size:8.4px;color:#000;transform:scaleX(0.8589);clip-path:inset(0 0 4.2px 0);">0.18316(6)</span>
<span class="t" style="left:637.50px;top:313.80px;font-size:8.4px;color:#000;transform:scaleX(0.8744);clip-path:inset(0 0 4.2px 0);">0.46595(14)</span>
<span class="t" style="left:680.70px;top:313.80px;font-size:8.4px;color:#000;transform:scaleX(0.8700);clip-path:inset(0 0 4.2px 0);">0.57771(14)</span>
<span class="t" style="left:521.80px;top:369.60px;font-size:8.8px;color:#111;transform:scaleX(0.8833);">Atomic parameters (asym. sites)</span>
<span class="t" style="left:734.98px;top:369.60px;font-size:8.8px;color:#111;transform:scaleX(0.9000);">81</span>
<span class="t" style="left:782.91px;top:369.60px;font-size:8.8px;color:#111;transform:scaleX(0.9000);">(81)</span>
<span class="t" style="left:521.80px;top:382.60px;font-size:8.8px;color:#111;transform:scaleX(0.8897);">Symmetry records</span>
<span class="t" style="left:739.38px;top:382.60px;font-size:8.8px;color:#111;transform:scaleX(0.9000);">8</span>
<span class="t" style="left:521.80px;top:394.60px;font-size:8.8px;color:#111;transform:scaleX(0.9323);">Atoms in unit cell</span>
<span class="t" style="left:730.58px;top:394.60px;font-size:8.8px;color:#111;transform:scaleX(0.9000);">640</span>
<span class="t" style="left:521.80px;top:406.60px;font-size:8.8px;color:#111;transform:scaleX(0.9069);">Bond parameters (non-bonding contacts, H-bonds)</span>
<span class="t" style="left:734.98px;top:406.60px;font-size:8.8px;color:#111;transform:scaleX(0.9000);">77</span>
<span class="t" style="left:774.11px;top:406.60px;font-size:8.8px;color:#111;transform:scaleX(0.9000);">(0, 44)</span>
<span class="t" style="left:521.80px;top:419.60px;font-size:8.8px;color:#111;transform:scaleX(0.9160);">Molecular units (mol./polym. sites)</span>
<span class="t" style="left:734.98px;top:419.60px;font-size:8.8px;color:#111;transform:scaleX(0.9000);">10</span>
<span class="t" style="left:774.11px;top:419.60px;font-size:8.8px;color:#111;transform:scaleX(0.9000);">(81, 0)</span>
<span class="t" style="left:521.80px;top:431.60px;font-size:8.8px;color:#111;transform:scaleX(0.8804);">Created atoms</span>
<span class="t" style="left:730.58px;top:431.60px;font-size:8.8px;color:#111;transform:scaleX(0.9000);">105</span>
<span class="t" style="left:521.80px;top:444.60px;font-size:8.8px;color:#111;transform:scaleX(0.9058);">Created bonds (H-bonds/contacts)</span>
<span class="t" style="left:734.98px;top:444.60px;font-size:8.8px;color:#111;transform:scaleX(0.9000);">95</span>
<span class="t" style="left:778.51px;top:444.60px;font-size:8.8px;color:#111;transform:scaleX(0.9000);">(0, 0)</span>
<span class="t" style="left:521.80px;top:456.60px;font-size:8.8px;color:#111;transform:scaleX(0.8931);">Created molecules (complete)</span>
<span class="t" style="left:734.98px;top:456.60px;font-size:8.8px;color:#111;transform:scaleX(0.9000);">10</span>
<span class="t" style="left:782.91px;top:456.60px;font-size:8.8px;color:#111;transform:scaleX(0.9000);">(10)</span>
<span class="t" style="left:7.60px;top:490.80px;font-size:9.4px;color:#f2f4f8;transform:scaleX(0.8315);">Auto Save: No files presently modified.</span>
<span class="t" style="left:563.50px;top:490.80px;font-size:8.8px;color:#f2f4f8;transform:scaleX(0.7665);">Blar</span>
<span class="t" style="left:581.80px;top:490.80px;font-size:9.4px;color:#1c2235;transform:scaleX(0.8455);">Manual</span>
<span class="t" style="left:651.00px;top:490.80px;font-size:8.8px;color:#f2f4f8;transform:scaleX(0.7873);">Y. 1.10255 c</span>
<span class="t" style="left:724.00px;top:490.80px;font-size:8.8px;color:#f2f4f8;transform:scaleX(0.8726);">81 parms</span>
<span class="t" style="left:771.00px;top:490.80px;font-size:8.8px;color:#f2f4f8;transform:scaleX(0.8764);">105 atoms</span>
<span class="t" style="left:818.00px;top:490.80px;font-size:8.8px;color:#f2f4f8;transform:scaleX(0.8839);">95 bonds</span>
<span class="t" style="left:865.00px;top:490.80px;font-size:8.8px;color:#f2f4f8;transform:scaleX(0.9009);">10 mol.</span>
<span class="t" style="left:907.00px;top:490.80px;font-size:8.8px;color:#f2f4f8;transform:scaleX(0.8763);">0 polyh.</span>
</body></html>
